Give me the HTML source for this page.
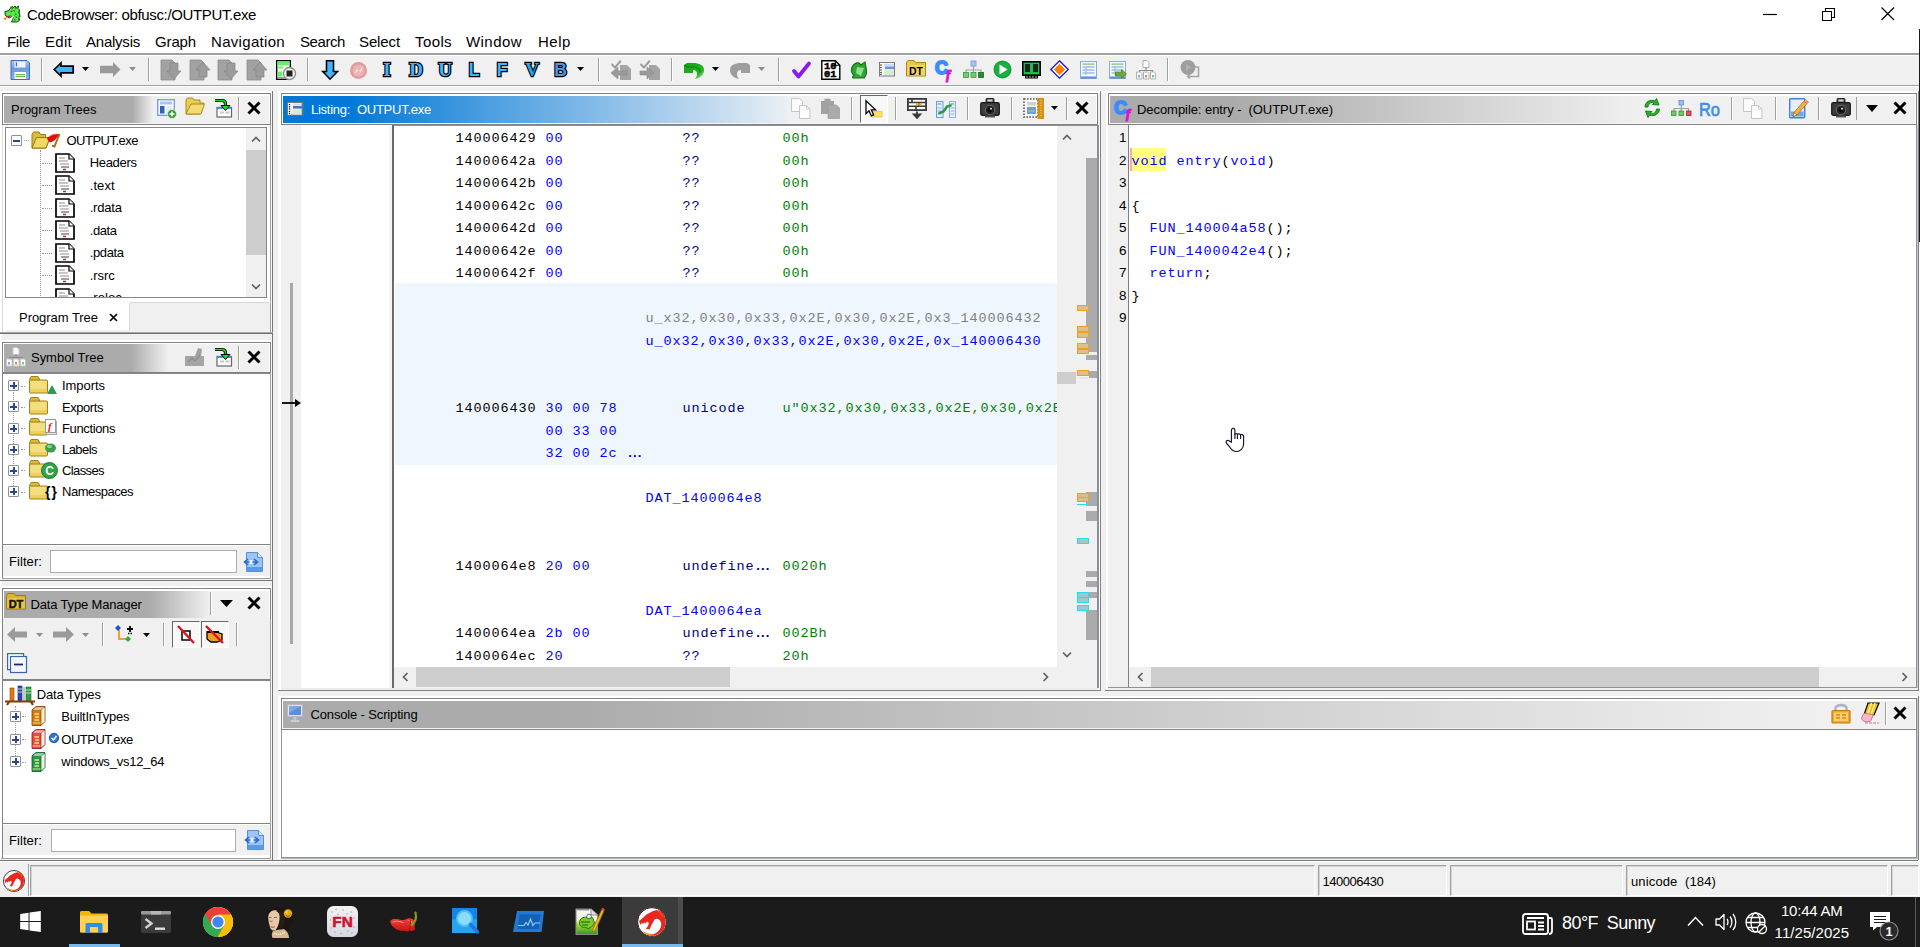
<!DOCTYPE html><html><head><meta charset="utf-8"><title>CodeBrowser: obfusc:/OUTPUT.exe</title><style>html,body{margin:0;padding:0}body{width:1920px;height:947px;position:relative;overflow:hidden;background:#f0f0f0;font-family:"Liberation Sans",sans-serif}body div,body svg{position:absolute;box-sizing:border-box}svg{overflow:visible}</style></head><body><div style="left:0px;top:0px;width:1920px;height:53px;background:#ffffff;"></div>
<svg style="left:3px;top:5px;" width="18" height="18" viewBox="0 0 18 18">
<path d="M2 6.500L6 5.500 7.500 3 9 1.500 10.500 2.500 12 1 13.500 2.500 15.500 1 15 3.500 16.500 5 16 8 17 10 16 12.500 16.500 15 14.500 17 8.500 17 9.500 14 11 10.500 9 11.500 6 13 4.500 12 3 11 2 9z" fill="#48f048" stroke="#0a2a0a" stroke-width=".9" stroke-linejoin="round"/>
<path d="M8 2l1.500 1.500M12 1.500l1 2M15.500 7l1 .5M16 11l1 .5M15.500 14l1 1M11 5.500l.5.500M12.500 9l.5.500M11.500 14.500l.5.500M13 12l.5.500" stroke="#4a5a0a" stroke-width="1.100" stroke-linecap="round"/>
<path d="M3.500 11.500l5-1.500-2.500 2.500z" fill="#d81010"/>
<path d="M0 13.500l4-1.500-1 3-1.500-.5z" fill="#ff8a10"/>
<path d="M10.500 10.500L7.500 16" stroke="#fff" stroke-width="1.300"/>
<circle cx="8.500" cy="6.300" r=".9" fill="#d81010"/></svg>
<div style="left:27px;top:4.80px;font:15px/20px 'Liberation Sans', sans-serif;color:#000;white-space:pre;letter-spacing:-0.357px;">CodeBrowser: obfusc:/OUTPUT.exe</div>
<svg style="left:1763px;top:8px;" width="16" height="12" viewBox="0 0 16 12"><path d="M0 6.5H14" stroke="#000" stroke-width="1.2"/></svg>
<svg style="left:1822px;top:8px;" width="14" height="14" viewBox="0 0 14 14"><path d="M.5 3.5h9v9h-9z M3.5 3.5v-3h9v9h-3" fill="none" stroke="#000" stroke-width="1.1"/></svg>
<svg style="left:1881px;top:7px;" width="14" height="14" viewBox="0 0 14 14"><path d="M.5 .5L13 13M13 .5L.5 13" stroke="#000" stroke-width="1.2"/></svg>
<div style="left:7px;top:31.80px;font:15px/20px 'Liberation Sans', sans-serif;color:#000;white-space:pre;letter-spacing:-0.292px;">File</div>
<div style="left:45px;top:31.80px;font:15px/20px 'Liberation Sans', sans-serif;color:#000;white-space:pre;letter-spacing:0.288px;">Edit</div>
<div style="left:86px;top:31.80px;font:15px/20px 'Liberation Sans', sans-serif;color:#000;white-space:pre;letter-spacing:-0.232px;">Analysis</div>
<div style="left:155px;top:31.80px;font:15px/20px 'Liberation Sans', sans-serif;color:#000;white-space:pre;letter-spacing:-0.137px;">Graph</div>
<div style="left:211px;top:31.80px;font:15px/20px 'Liberation Sans', sans-serif;color:#000;white-space:pre;letter-spacing:0.313px;">Navigation</div>
<div style="left:300px;top:31.80px;font:15px/20px 'Liberation Sans', sans-serif;color:#000;white-space:pre;letter-spacing:-0.421px;">Search</div>
<div style="left:359px;top:31.80px;font:15px/20px 'Liberation Sans', sans-serif;color:#000;white-space:pre;letter-spacing:-0.115px;">Select</div>
<div style="left:415px;top:31.80px;font:15px/20px 'Liberation Sans', sans-serif;color:#000;white-space:pre;letter-spacing:0.397px;">Tools</div>
<div style="left:466px;top:31.80px;font:15px/20px 'Liberation Sans', sans-serif;color:#000;white-space:pre;letter-spacing:0.442px;">Window</div>
<div style="left:538px;top:31.80px;font:15px/20px 'Liberation Sans', sans-serif;color:#000;white-space:pre;letter-spacing:0.538px;">Help</div>
<div style="left:0px;top:53px;width:1920px;height:2px;background:#a0a0a0;"></div>
<div style="left:0px;top:55px;width:1920px;height:1px;background:#ffffff;"></div>
<div style="left:0px;top:56px;width:1920px;height:29px;background:#f0f0f0;"></div>
<div style="left:0px;top:85px;width:1920px;height:1px;background:#a0a0a0;"></div>
<div style="left:0px;top:86px;width:1920px;height:1px;background:#ffffff;"></div>
<div style="left:41px;top:58px;width:1px;height:23px;background:#a0a0a0;"></div>
<div style="left:42px;top:58px;width:1px;height:23px;background:#ffffff;"></div>
<div style="left:148px;top:58px;width:1px;height:23px;background:#a0a0a0;"></div>
<div style="left:149px;top:58px;width:1px;height:23px;background:#ffffff;"></div>
<div style="left:307px;top:58px;width:1px;height:23px;background:#a0a0a0;"></div>
<div style="left:308px;top:58px;width:1px;height:23px;background:#ffffff;"></div>
<div style="left:598px;top:58px;width:1px;height:23px;background:#a0a0a0;"></div>
<div style="left:599px;top:58px;width:1px;height:23px;background:#ffffff;"></div>
<div style="left:671px;top:58px;width:1px;height:23px;background:#a0a0a0;"></div>
<div style="left:672px;top:58px;width:1px;height:23px;background:#ffffff;"></div>
<div style="left:778px;top:58px;width:1px;height:23px;background:#a0a0a0;"></div>
<div style="left:779px;top:58px;width:1px;height:23px;background:#ffffff;"></div>
<div style="left:1167px;top:58px;width:1px;height:23px;background:#a0a0a0;"></div>
<div style="left:1168px;top:58px;width:1px;height:23px;background:#ffffff;"></div>
<svg style="left:10px;top:60px;" width="20" height="20" viewBox="0 0 20 20"><defs><linearGradient id="sv" x1="0" y1="0" x2="0" y2="1"><stop offset="0" stop-color="#a9c4ee"/><stop offset=".45" stop-color="#6f9bdc"/><stop offset="1" stop-color="#8fb0e6"/></linearGradient></defs>
<path d="M1 .5h16l2.5 2.5v16.5h-18.500z" fill="url(#sv)" stroke="#3b6cc0" stroke-width="1"/>
<rect x="4.500" y="1.500" width="11" height="6" fill="#eef3fb"/><rect x="5.800" y="2.300" width="1.300" height="4" fill="#3b6cc0"/>
<rect x="4.500" y="12" width="11.500" height="7" fill="#fff"/><rect x="5.500" y="14" width="9.500" height="1.200" fill="#74b84a"/><rect x="5.500" y="16" width="9.500" height="1.200" fill="#74b84a"/></svg>
<svg style="left:53px;top:62px;" width="21" height="16" viewBox="0 0 21 16"><path d="M1.200 7.500L8 1v3.200h12.200v6.600H8V14z" fill="#40b4ff" stroke="#000" stroke-width="1.700" stroke-linejoin="miter"/></svg>
<svg style="left:82px;top:67px;" width="7" height="4" viewBox="0 0 7 4"><path d="M0 0h7l-3.5 4z" fill="#000"/></svg>
<svg style="left:100px;top:62px;" width="21" height="16" viewBox="0 0 21 16"><path d="M20.500 7.500L13 0v3.800H0v7.400h13V15z" fill="#9a9a9a"/></svg>
<svg style="left:129px;top:67px;" width="7" height="4" viewBox="0 0 7 4"><path d="M0 0h7l-3.5 4z" fill="#8e8e8e"/></svg>
<svg style="left:161px;top:60px;" width="20" height="20" viewBox="0 0 20 20"><path d="M0 0h11l3 3v17H0z" fill="#a2a2a2"/><path d="M0 0h11l3 3v17H0z" fill="none" stroke="#8a8a8a" stroke-width=".8"/><path d="M9 3h8v8h3l-7 8-7-8h3z" fill="#9c9c9c" stroke="#858585" stroke-width=".7"/></svg>
<svg style="left:190px;top:60px;" width="20" height="20" viewBox="0 0 20 20"><path d="M0 0h11l3 3v17H0z" fill="#a2a2a2"/><path d="M0 0h11l3 3v17H0z" fill="none" stroke="#8a8a8a" stroke-width=".8"/><path d="M13 2l7 8h-3v7H9v-7H6z" fill="#9c9c9c" stroke="#858585" stroke-width=".7"/></svg>
<svg style="left:218px;top:60px;" width="20" height="20" viewBox="0 0 20 20"><path d="M0 0h11l3 3v17H0z" fill="#a2a2a2"/><path d="M0 0h11l3 3v17H0z" fill="none" stroke="#8a8a8a" stroke-width=".8"/><path d="M9 3h8v8h3l-7 8-7-8h3z" fill="#9c9c9c" stroke="#858585" stroke-width=".7"/></svg>
<svg style="left:247px;top:60px;" width="20" height="20" viewBox="0 0 20 20"><path d="M0 0h11l3 3v17H0z" fill="#a2a2a2"/><path d="M0 0h11l3 3v17H0z" fill="none" stroke="#8a8a8a" stroke-width=".8"/><path d="M13 2l7 8h-3v7H9v-7H6z" fill="#9c9c9c" stroke="#858585" stroke-width=".7"/></svg>
<svg style="left:276px;top:60px;" width="20" height="20" viewBox="0 0 20 20"><rect x=".7" y=".7" width="13.600" height="18.600" fill="#fff" stroke="#000" stroke-width="1.400"/>
<rect x="1.400" y="1.400" width="12.200" height="4" fill="#66f066"/><rect x="1.400" y="6.500" width="6" height="2" fill="#66f066"/><rect x="1.400" y="11.500" width="5" height="5" fill="#66f066"/><rect x="1.400" y="17" width="12" height="1.600" fill="#999"/>
<circle cx="13.500" cy="13.500" r="6" fill="#f4f4f4" stroke="#8e8e8e" stroke-width="1.400"/><rect x="10.500" y="10.500" width="6" height="6" fill="#222"/></svg>
<svg style="left:322px;top:60px;" width="16" height="20" viewBox="0 0 16 20"><path d="M4.500 .8h7v10.700h4L8 19.200 .8 11.500h3.700z" fill="#40b4ff" stroke="#000" stroke-width="1.600"/></svg>
<svg style="left:349px;top:61px;" width="19" height="19" viewBox="0 0 19 19"><circle cx="9.500" cy="9.500" r="8.500" fill="#e59a9a"/><circle cx="9.500" cy="9.500" r="6" fill="#ecb5b5"/><path d="M5 13l3-5 2 2 4-5-2 6-2-2z" fill="#f7e0e0"/></svg>
<svg style="left:379px;top:60px" width="16" height="20" viewBox="0 0 16 20"><text x="8.0" y="15.500" text-anchor="middle" font-family='"Liberation Serif",serif' font-weight="bold" font-size="19" fill="#40b4ff" stroke="#000" stroke-width="2.400" paint-order="stroke">I</text></svg>
<svg style="left:408px;top:60px" width="16" height="20" viewBox="0 0 16 20"><text x="8.0" y="15.500" text-anchor="middle" font-family='"Liberation Serif",serif' font-weight="bold" font-size="19" fill="#40b4ff" stroke="#000" stroke-width="2.400" paint-order="stroke">D</text></svg>
<svg style="left:437px;top:60px" width="16" height="20" viewBox="0 0 16 20"><text x="8.0" y="15.500" text-anchor="middle" font-family='"Liberation Serif",serif' font-weight="bold" font-size="19" fill="#40b4ff" stroke="#000" stroke-width="2.400" paint-order="stroke">U</text></svg>
<svg style="left:466px;top:60px" width="16" height="20" viewBox="0 0 16 20"><text x="8.0" y="15.500" text-anchor="middle" font-family='"Liberation Sans",sans-serif' font-weight="bold" font-size="17.5" fill="#40b4ff" stroke="#000" stroke-width="2.400" paint-order="stroke">L</text></svg>
<svg style="left:494px;top:60px" width="16" height="20" viewBox="0 0 16 20"><text x="8.0" y="15.500" text-anchor="middle" font-family='"Liberation Sans",sans-serif' font-weight="bold" font-size="17.5" fill="#40b4ff" stroke="#000" stroke-width="2.400" paint-order="stroke">F</text></svg>
<svg style="left:524px;top:60px" width="16" height="20" viewBox="0 0 16 20"><text x="8.0" y="15.500" text-anchor="middle" font-family='"Liberation Serif",serif' font-weight="bold" font-size="19" fill="#10b0f0" stroke="#000" stroke-width="2.400" paint-order="stroke">V</text></svg>
<svg style="left:553px;top:60px" width="15" height="20" viewBox="0 0 15 20"><text x="7.5" y="15.500" text-anchor="middle" font-family='"Liberation Sans",sans-serif' font-weight="bold" font-size="17.5" fill="#4898e8" stroke="#000" stroke-width="2.400" paint-order="stroke">B</text></svg>
<svg style="left:577px;top:67px;" width="7" height="4" viewBox="0 0 7 4"><path d="M0 0h7l-3.5 4z" fill="#000"/></svg>
<svg style="left:611px;top:60px;" width="20" height="20" viewBox="0 0 20 20"><path d="M1 3l3 3 5-6 1.500 1.500L4 9 0 5z" fill="#9a9a9a"/><path d="M9 5h7l4 4v11H9z" fill="#a4a4a4"/><path d="M0 13l7-6v4h9v4H7v4z" fill="#9a9a9a" stroke="#888" stroke-width=".6"/></svg>
<svg style="left:640px;top:60px;" width="20" height="20" viewBox="0 0 20 20"><path d="M1 3l3 3 5-6 1.500 1.500L4 9 0 5z" fill="#9a9a9a"/><path d="M9 5h7l4 4v11H9z" fill="#a4a4a4"/><path d="M14 13L7 7v4H0v4h7v4z" fill="#9a9a9a" stroke="#888" stroke-width=".6"/></svg>
<svg style="left:683px;top:62px;" width="22" height="18" viewBox="0 0 22 18"><defs><linearGradient id="ug" x1="0" y1="0" x2="1" y2="1"><stop offset="0" stop-color="#1aa01a"/><stop offset=".7" stop-color="#22b022"/><stop offset="1" stop-color="#d8f0d8"/></linearGradient></defs>
<path d="M1 3v8h9v-3c3 0 4 2 4 4s-1 4-2 5c5-1 9-4 9-9S16 1 10 1H4z" fill="url(#ug)"/><path d="M1 3l3 2h6c4 0 7 2 7 5" fill="none" stroke="#0c7c0c" stroke-width="1"/></svg>
<svg style="left:712px;top:67px;" width="7" height="4" viewBox="0 0 7 4"><path d="M0 0h7l-3.5 4z" fill="#000"/></svg>
<svg style="left:730px;top:62px;" width="22" height="18" viewBox="0 0 22 18"><path d="M20 3v8h-9v-3c-3 0-4 2-4 4s1 4 2 5c-5-1-9-4-9-9S5 1 11 1h6z" fill="#9d9d9d"/></svg>
<svg style="left:758px;top:67px;" width="7" height="4" viewBox="0 0 7 4"><path d="M0 0h7l-3.5 4z" fill="#8e8e8e"/></svg>
<svg style="left:792px;top:61px;" width="19" height="18" viewBox="0 0 19 18"><path d="M2 10l4.500 5.500L17 2.500" fill="none" stroke="#8a1af0" stroke-width="3.800" stroke-linecap="round" stroke-linejoin="round"/></svg>
<svg style="left:821px;top:60px" width="20" height="20" viewBox="0 0 20 20"><path d="M.8 .8h13.500l4.500 4.500v13.900H.8z" fill="#fff" stroke="#000" stroke-width="1.400"/><path d="M14.300 .8v4.500h4.500" fill="none" stroke="#000" stroke-width="1"/><text x="3" y="9" font-family='"Liberation Mono",monospace' font-weight="bold" font-size="9.500" fill="#000" stroke="#000" stroke-width=".5" textLength="12.500" lengthAdjust="spacingAndGlyphs">10</text><text x="3" y="17" font-family='"Liberation Mono",monospace' font-weight="bold" font-size="9.500" fill="#000" stroke="#000" stroke-width=".5" textLength="12.500" lengthAdjust="spacingAndGlyphs">01</text></svg>
<svg style="left:850px;top:61px;" width="18" height="18" viewBox="0 0 18 18"><path d="M2 6c2-3 4-5 7-4l2 2 4-3 1 6c1 4 0 8-2 10H3c-1-1 0-2 1-3-2-1-3-4-2-8z" fill="#2ea82e" stroke="#1a6a1a" stroke-width="1.200"/><path d="M7 6l7 1-3 8-5-3z" fill="#8fe08f"/></svg>
<svg style="left:879px;top:62px;" width="16" height="15" viewBox="0 0 16 15"><rect x=".5" y=".5" width="15" height="13.500" fill="#f4f8f4" stroke="#7b7b7b"/><rect x="1" y="1" width="2.500" height="12.500" fill="#fff"/><path d="M2 3h.01M2 5.500h.01M2 8h.01M2 10.500h.01M2 12.500h.01" stroke="#000" stroke-width="1.400" stroke-linecap="round"/><rect x="5" y="2" width="10" height="2" fill="#c8ddf8"/><rect x="6" y="4.500" width="9" height="2.600" fill="#7090d8"/><rect x="5" y="8" width="10" height="5" fill="#d4ecd4"/></svg>
<svg style="left:906px;top:60px" width="20" height="17" viewBox="0 0 20 17"><path d="M.5 2.500l1.500-2h6l1.500 2h10v13.500H.5z" fill="#e8c84a" stroke="#a8861c"/><rect x="1.200" y="5" width="17.600" height="10.300" fill="#f0d468"/><text x="10" y="14.500" text-anchor="middle" font-family='"Liberation Sans",sans-serif' font-weight="bold" font-size="10.500" fill="#000">DT</text></svg>
<svg style="left:935px;top:60px" width="21" height="21" viewBox="0 0 21 21"><text x="0" y="14" font-family='"Liberation Sans",sans-serif' font-weight="bold" font-size="18" fill="#3a8cff" stroke="#3a8cff" stroke-width="1.800">C</text><text x="11" y="19" font-family='"Liberation Serif",serif' font-weight="bold" font-style="italic" font-size="13" fill="#d818c8" stroke="#d818c8" stroke-width="1">f</text></svg>
<svg style="left:963px;top:61px;" width="21" height="17" viewBox="0 0 21 17"><rect x="8" y="0" width="5" height="5" fill="#a8c8f0" stroke="#6a98d8" stroke-width=".8"/><path d="M10.500 5v4M3 11.500V9h15v2.500M10.500 9v2.500" fill="none" stroke="#a0a0a0" stroke-width="1.200"/><rect x=".5" y="11.500" width="5" height="5" fill="#78c878" stroke="#3a9a3a" stroke-width=".8"/><rect x="8" y="11.500" width="5" height="5" fill="#78c878" stroke="#3a9a3a" stroke-width=".8"/><rect x="15.500" y="11.500" width="5" height="5" fill="#2e8a2e" stroke="#1d6b1d" stroke-width=".8"/></svg>
<svg style="left:993px;top:60px;" width="19" height="19" viewBox="0 0 19 19"><circle cx="9.500" cy="9.500" r="9" fill="#12a03a"/><circle cx="9.500" cy="9.500" r="7.600" fill="#18b040"/><path d="M6.500 4.500l8 5-8 5z" fill="#fff"/></svg>
<svg style="left:1022px;top:61px;" width="19" height="18" viewBox="0 0 19 18"><rect x=".8" y=".8" width="17.400" height="13.400" fill="#18c048" stroke="#000" stroke-width="1.600"/><rect x="3" y="3" width="5" height="8" fill="#222"/><rect x="11" y="3" width="5" height="8" fill="#222"/><rect x="3" y="14" width="13" height="3.500" fill="#000"/><path d="M5 15v2M8 15v2M11 15v2M14 15v2" stroke="#ddd" stroke-width=".9"/></svg>
<svg style="left:1050px;top:60px;" width="19" height="19" viewBox="0 0 19 19"><path d="M9.500 .8L18.200 9.500 9.500 18.200 .8 9.500z" fill="#fff" stroke="#1414c8" stroke-width="1.300"/><path d="M9.500 3.500l2.500 3.500 3.500 2.500-3.500 2.500-2.500 3.500-2.500-3.500L3.500 9.500 7 7z" fill="#ff8000"/><circle cx="9.500" cy="9.500" r="4" fill="#ff8000"/></svg>
<svg style="left:1080px;top:61px;" width="17" height="18" viewBox="0 0 17 18"><rect x=".5" y=".5" width="16" height="17" fill="#f4f8fe" stroke="#88aadc"/><rect x="1" y="15.500" width="15" height="2" fill="#5f8fd6"/><rect x="2.500" y="2.500" width="12" height="1.200" fill="#7cc06c"/><path d="M2.500 6h12M2.500 9h12M2.500 12h12M6 5v9" stroke="#a0bce6" stroke-width="1.300"/></svg>
<svg style="left:1109px;top:61px;" width="18" height="19" viewBox="0 0 18 19"><rect x=".5" y=".5" width="16" height="17" fill="#f4f8fe" stroke="#88aadc"/><rect x="1" y="15.500" width="15" height="2" fill="#5f8fd6"/><rect x="2.500" y="2.500" width="12" height="1.200" fill="#7cc06c"/><path d="M2.500 6h12M2.500 9h12M2.500 12h12M6 5v9" stroke="#a0bce6" stroke-width="1.300"/><path d="M6.500 11h6V8.500l5 4.500-5 4.500V15h-6z" fill="#6ea83c" stroke="#4a8a1c" stroke-width=".8"/></svg>
<svg style="left:1136px;top:60px;" width="20" height="20" viewBox="0 0 20 20"><path d="M7 .5h4l2 2v5H7z" fill="#fafafa" stroke="#b0b0b0"/><path d="M10 7.500v3M3.500 12v-1.500h13V12" fill="none" stroke="#8c8c8c" stroke-width="1.200"/><path d="M.5 12h4l1.500 1.500v5.500H.5z" fill="#fff" stroke="#b0b0b0"/><path d="M7.500 12h4l1.500 1.500v5.500h-5.500z" fill="#fff" stroke="#b0b0b0"/><path d="M14.500 12h4l1 1.500v5.500h-5z" fill="#fff" stroke="#b0b0b0"/><rect x="2" y="15" width="2" height="2.500" fill="#78a8e8"/><rect x="9" y="15" width="2" height="2.500" fill="#f08040"/><rect x="16" y="15" width="2" height="2.500" fill="#70d070"/></svg>
<svg style="left:1180px;top:60px;" width="20" height="20" viewBox="0 0 20 20"><circle cx="8" cy="7.500" r="7.500" fill="#9e9e9e"/><path d="M6 4l5 3.500-5 3.500z" fill="#b2b2b2"/><path d="M15 7h3.500v9.500H8M10 14.500l-2.500 2 2.500 2" fill="none" stroke="#a6a6a6" stroke-width="1.600"/></svg>
<div style="left:0px;top:91px;width:273px;height:2px;background:#ffffff;"></div>
<div style="left:278px;top:91px;width:1642px;height:2px;background:#ffffff;"></div>
<div style="left:0px;top:91px;width:2px;height:768px;background:#ffffff;"></div>
<div style="left:272px;top:91px;width:1px;height:770px;background:#767676;"></div>
<div style="left:270px;top:93px;width:1px;height:239px;background:#a0a0a0;"></div>
<div style="left:271px;top:93px;width:1px;height:239px;background:#f8f8f8;"></div>
<div style="left:0px;top:332px;width:273px;height:1px;background:#a8a8a8;"></div>
<div style="left:0px;top:333px;width:273px;height:1px;background:#6e6e6e;"></div>
<div style="left:2px;top:125px;width:1px;height:207px;background:#dcdcdc;"></div>
<div style="left:3px;top:125px;width:2px;height:207px;background:#ffffff;"></div>
<div style="left:2px;top:93px;width:269px;height:32px;border:1px solid #828282;background:#ffffff;"></div>
<div style="left:4px;top:96px;width:265px;height:27px;background:linear-gradient(90deg,#ababab 0,#ababab 128px,#f0f0f0 149px);"></div>
<div style="left:4px;top:123px;width:265px;height:1px;background:#f4f4f4;"></div>
<svg style="left:157px;top:99px;" width="20" height="20" viewBox="0 0 20 20"><rect x=".700" y=".700" width="16.600" height="15.600" fill="#fdfdff" stroke="#7ba0dc" stroke-width="1.400"/><rect x="3" y="2.500" width="12" height="3" fill="#a8c6ee"/><rect x="3" y="7" width="4.500" height="7.500" fill="#2f62b8"/><rect x="9" y="7" width="6" height="7.500" fill="#e3ecf8"/><circle cx="15" cy="15" r="4.500" fill="#3a9a3a" stroke="#d8efd8" stroke-width=".8"/><path d="M12.500 15h5M15 12.500v5" stroke="#fff" stroke-width="1.500"/></svg>
<svg style="left:185px;top:97px;" width="20" height="19" viewBox="0 0 20 19"><path d="M1 3l1.500-2h5l1.500 2h6v3h4l-4 11H1z" fill="#e9cc53" stroke="#a88a1e"/><path d="M1 17L6 7h13.500L16 17z" fill="#f3dc74" stroke="#a88a1e"/></svg>
<svg style="left:214px;top:99px;" width="20" height="20" viewBox="0 0 20 20"><rect x="3" y="8.500" width="14.500" height="9.500" fill="#fff" stroke="#666" stroke-width="1.200"/><rect x="3" y="8" width="14.500" height="1.800" fill="#2a80f0"/><path d="M6 13.500h4M11.500 13.500h4" stroke="#c8c8c8" stroke-width="2"/><path d="M1 1.500h7c2.500 0 3.500 1.500 3.500 3.500v1.500" fill="none" stroke="#000" stroke-width="3.200"/><path d="M1 1.500h7c2.500 0 3.500 1.500 3.500 3.500v1.500" fill="none" stroke="#18e018" stroke-width="1.500"/><path d="M7 6.500h9l-4.500 5z" fill="#18e018" stroke="#000" stroke-width="1"/></svg>
<div style="left:11px;top:101.30px;font:13px/17px 'Liberation Sans', sans-serif;color:#000;white-space:pre;letter-spacing:-0.044px;">Program Trees</div>
<div style="left:238px;top:97px;width:1px;height:23px;background:#a0a0a0;"></div>
<div style="left:239px;top:97px;width:1px;height:23px;background:#ffffff;"></div>
<svg style="left:247px;top:101px;" width="14" height="14" viewBox="0 0 14 14"><path d="M1.500 1.500l11 11M12.500 1.500l-11 11" stroke="#000" stroke-width="3" stroke-linecap="butt"/></svg>
<div style="left:3px;top:125px;width:267px;height:178px;background:#ffffff;"></div>
<div style="left:5px;top:127px;width:262px;height:171px;background:#ffffff;border:1px solid #828790;"></div>
<div style="left:246px;top:128px;width:20px;height:169px;background:#f0f0f0;"></div>
<div style="left:246px;top:150px;width:20px;height:105px;background:#cdcdcd;"></div>
<svg style="left:250px;top:133px;" width="12" height="12" viewBox="-6 -6 12 12"><path d="M-4 2.500L0 -1.500 4 2.500" fill="none" stroke="#606060" stroke-width="1.700"/></svg>
<svg style="left:250px;top:281px;" width="12" height="12" viewBox="-6 -6 12 12"><path d="M-4 -2.500L0 1.500 4 -2.500" fill="none" stroke="#606060" stroke-width="1.700"/></svg>
<div style="left:6px;top:128px;width:240px;height:169px;overflow:hidden">
<div style="left:34px;top:22px;width:0;height:150px;border-left:1px dotted #9a9a9a"></div>
<div style="left:5px;top:7px;width:11px;height:11px;background:#ffffff;border:1px solid #919191;border-radius:1px;"></div>
<div style="left:7px;top:11.5px;width:7px;height:2px;background:#2b4594;"></div>
<div style="left:18px;top:12px;width:5px;height:0;border-top:1px dotted #9a9a9a"></div>
<svg style="left:25px;top:3px;" width="30" height="18" viewBox="0 0 30 18"><path d="M1 3.500l1.500-2.500h5.500l1.500 2.500h5v3h4.500L15 17H1z" fill="#dcbc38" stroke="#96780e"/><path d="M1 17L5.500 6.500h13.500L15 17z" fill="#f2da62" stroke="#96780e"/><path d="M16 8c2-4 7-5.500 12.500-5-2 3-4 7-9.500 8.500z" fill="#e00808"/><path d="M18 6c2-2 5-2.800 8-2.800" fill="none" stroke="#ff6a5a" stroke-width="1"/><path d="M28.500 3L23.500 15.500l-2.500-.7" fill="none" stroke="#9a7a14" stroke-width="2"/></svg>
<div style="left:60.5px;top:3.70px;font:13px/17px 'Liberation Sans', sans-serif;color:#000;white-space:pre;letter-spacing:-0.507px;">OUTPUT.exe</div>
<div style="left:36px;top:34.5px;width:10px;height:0;border-top:1px dotted #9a9a9a"></div>
<svg style="left:49px;top:24.5px;" width="20" height="20" viewBox="0 0 20 20"><path d="M1 1h13l5 5v13H1z" fill="#fff" stroke="#000" stroke-width="1.700"/><path d="M14 1v5h5" fill="#fff" stroke="#000" stroke-width="1.200"/><path d="M4 5h6M4 8h9M5 11h9" stroke="#b4b4b4" stroke-width="1.300"/><path d="M6 14h8" stroke="#8a8a8a" stroke-width="1.600"/><path d="M8 16.500h3" stroke="#b03030" stroke-width="1.500"/></svg>
<div style="left:83.7px;top:26.20px;font:13px/17px 'Liberation Sans', sans-serif;color:#000;white-space:pre;letter-spacing:-0.305px;">Headers</div>
<div style="left:36px;top:57.0px;width:10px;height:0;border-top:1px dotted #9a9a9a"></div>
<svg style="left:49px;top:47.0px;" width="20" height="20" viewBox="0 0 20 20"><path d="M1 1h13l5 5v13H1z" fill="#fff" stroke="#000" stroke-width="1.700"/><path d="M14 1v5h5" fill="#fff" stroke="#000" stroke-width="1.200"/><path d="M4 5h6M4 8h9M5 11h9" stroke="#b4b4b4" stroke-width="1.300"/><path d="M6 14h8" stroke="#8a8a8a" stroke-width="1.600"/><path d="M8 16.500h3" stroke="#b03030" stroke-width="1.500"/></svg>
<div style="left:83.7px;top:48.70px;font:13px/17px 'Liberation Sans', sans-serif;color:#000;white-space:pre;letter-spacing:0.087px;">.text</div>
<div style="left:36px;top:79.5px;width:10px;height:0;border-top:1px dotted #9a9a9a"></div>
<svg style="left:49px;top:69.5px;" width="20" height="20" viewBox="0 0 20 20"><path d="M1 1h13l5 5v13H1z" fill="#fff" stroke="#000" stroke-width="1.700"/><path d="M14 1v5h5" fill="#fff" stroke="#000" stroke-width="1.200"/><path d="M4 5h6M4 8h9M5 11h9" stroke="#b4b4b4" stroke-width="1.300"/><path d="M6 14h8" stroke="#8a8a8a" stroke-width="1.600"/><path d="M8 16.500h3" stroke="#b03030" stroke-width="1.500"/></svg>
<div style="left:83.7px;top:71.20px;font:13px/17px 'Liberation Sans', sans-serif;color:#000;white-space:pre;letter-spacing:-0.207px;">.rdata</div>
<div style="left:36px;top:102.0px;width:10px;height:0;border-top:1px dotted #9a9a9a"></div>
<svg style="left:49px;top:92.0px;" width="20" height="20" viewBox="0 0 20 20"><path d="M1 1h13l5 5v13H1z" fill="#fff" stroke="#000" stroke-width="1.700"/><path d="M14 1v5h5" fill="#fff" stroke="#000" stroke-width="1.200"/><path d="M4 5h6M4 8h9M5 11h9" stroke="#b4b4b4" stroke-width="1.300"/><path d="M6 14h8" stroke="#8a8a8a" stroke-width="1.600"/><path d="M8 16.500h3" stroke="#b03030" stroke-width="1.500"/></svg>
<div style="left:83.7px;top:93.70px;font:13px/17px 'Liberation Sans', sans-serif;color:#000;white-space:pre;letter-spacing:-0.382px;">.data</div>
<div style="left:36px;top:124.5px;width:10px;height:0;border-top:1px dotted #9a9a9a"></div>
<svg style="left:49px;top:114.5px;" width="20" height="20" viewBox="0 0 20 20"><path d="M1 1h13l5 5v13H1z" fill="#fff" stroke="#000" stroke-width="1.700"/><path d="M14 1v5h5" fill="#fff" stroke="#000" stroke-width="1.200"/><path d="M4 5h6M4 8h9M5 11h9" stroke="#b4b4b4" stroke-width="1.300"/><path d="M6 14h8" stroke="#8a8a8a" stroke-width="1.600"/><path d="M8 16.500h3" stroke="#b03030" stroke-width="1.500"/></svg>
<div style="left:83.7px;top:116.20px;font:13px/17px 'Liberation Sans', sans-serif;color:#000;white-space:pre;letter-spacing:-0.357px;">.pdata</div>
<div style="left:36px;top:147.0px;width:10px;height:0;border-top:1px dotted #9a9a9a"></div>
<svg style="left:49px;top:137.0px;" width="20" height="20" viewBox="0 0 20 20"><path d="M1 1h13l5 5v13H1z" fill="#fff" stroke="#000" stroke-width="1.700"/><path d="M14 1v5h5" fill="#fff" stroke="#000" stroke-width="1.200"/><path d="M4 5h6M4 8h9M5 11h9" stroke="#b4b4b4" stroke-width="1.300"/><path d="M6 14h8" stroke="#8a8a8a" stroke-width="1.600"/><path d="M8 16.500h3" stroke="#b03030" stroke-width="1.500"/></svg>
<div style="left:83.7px;top:138.70px;font:13px/17px 'Liberation Sans', sans-serif;color:#000;white-space:pre;letter-spacing:-0.054px;">.rsrc</div>
<div style="left:36px;top:169.5px;width:10px;height:0;border-top:1px dotted #9a9a9a"></div>
<svg style="left:49px;top:159.5px;" width="20" height="20" viewBox="0 0 20 20"><path d="M1 1h13l5 5v13H1z" fill="#fff" stroke="#000" stroke-width="1.700"/><path d="M14 1v5h5" fill="#fff" stroke="#000" stroke-width="1.200"/><path d="M4 5h6M4 8h9M5 11h9" stroke="#b4b4b4" stroke-width="1.300"/><path d="M6 14h8" stroke="#8a8a8a" stroke-width="1.600"/><path d="M8 16.500h3" stroke="#b03030" stroke-width="1.500"/></svg>
<div style="left:83.7px;top:161.20px;font:13px/17px 'Liberation Sans', sans-serif;color:#000;white-space:pre;letter-spacing:0.035px;">.reloc</div>
</div>
<div style="left:130px;top:302px;width:141px;height:1px;background:#d9d9d9;"></div>
<div style="left:3px;top:303px;width:127px;height:27px;background:#ffffff;"></div>
<div style="left:129px;top:303px;width:1px;height:27px;background:#d9d9d9;"></div>
<div style="left:19px;top:308.80px;font:13px/17px 'Liberation Sans', sans-serif;color:#000;white-space:pre;letter-spacing:-0.039px;">Program Tree</div>
<svg style="left:108.5px;top:313px;" width="9" height="9" viewBox="0 0 9 9"><path d="M1 1l7 7M8 1l-7 7" stroke="#000" stroke-width="1.700"/></svg>
<div style="left:0px;top:340px;width:272px;height:2px;background:#ffffff;"></div>
<div style="left:2px;top:342px;width:1px;height:237px;background:#828282;"></div>
<div style="left:270px;top:342px;width:1px;height:237px;background:#a0a0a0;"></div>
<div style="left:271px;top:342px;width:1px;height:237px;background:#f8f8f8;"></div>
<div style="left:3px;top:576px;width:267px;height:2px;background:#ffffff;"></div>
<div style="left:2px;top:578px;width:269px;height:1px;background:#a0a0a0;"></div>
<div style="left:0px;top:580px;width:273px;height:1px;background:#767676;"></div>
<div style="left:2px;top:342px;width:269px;height:31px;border:1px solid #828282;background:#ffffff;"></div>
<div style="left:4px;top:344px;width:265px;height:28px;background:linear-gradient(90deg,#ababab 0,#ababab 127px,#f0f0f0 164px);"></div>
<svg style="left:6px;top:347px;" width="20" height="20" viewBox="0 0 20 20"><path d="M7 .5h4l2 2v5H7z" fill="#fafafa" stroke="#c8c8c8"/><path d="M10 7.500v3M3.500 12v-1.500h13V12" fill="none" stroke="#8c8c8c" stroke-width="1.200"/><path d="M.5 12h4l1.500 1.500v5.500H.5z" fill="#fff" stroke="#c8c8c8"/><path d="M7.500 12h4l1.500 1.500v5.500h-5.500z" fill="#fff" stroke="#c8c8c8"/><path d="M14.500 12h4l1 1.500v5.500h-5z" fill="#fff" stroke="#c8c8c8"/><rect x="2" y="15" width="2" height="2.500" fill="#78a8e8"/><rect x="9" y="15" width="2" height="2.500" fill="#f08040"/><rect x="16" y="15" width="2" height="2.500" fill="#70d070"/></svg>
<svg style="left:185px;top:347px;" width="20" height="20" viewBox="0 0 20 20"><rect x="0" y="9" width="19" height="10" fill="#a6a6a6"/><path d="M10 9l3-8 4 1-1 7z" fill="#a0a0a0"/><path d="M3 15l4-4 3 3 5-6" fill="none" stroke="#8d8d8d" stroke-width="1.500"/></svg>
<svg style="left:214px;top:348px;" width="20" height="20" viewBox="0 0 20 20"><rect x="3" y="8.500" width="14.500" height="9.500" fill="#fff" stroke="#666" stroke-width="1.200"/><rect x="3" y="8" width="14.500" height="1.800" fill="#2a80f0"/><path d="M6 13.500h4M11.500 13.500h4" stroke="#c8c8c8" stroke-width="2"/><path d="M1 1.500h7c2.500 0 3.500 1.500 3.500 3.500v1.500" fill="none" stroke="#000" stroke-width="3.200"/><path d="M1 1.500h7c2.500 0 3.500 1.500 3.500 3.500v1.500" fill="none" stroke="#18e018" stroke-width="1.500"/><path d="M7 6.500h9l-4.500 5z" fill="#18e018" stroke="#000" stroke-width="1"/></svg>
<div style="left:31px;top:349.30px;font:13px/17px 'Liberation Sans', sans-serif;color:#000;white-space:pre;letter-spacing:-0.024px;">Symbol Tree</div>
<div style="left:3px;top:373px;width:267px;height:1px;background:#828790;"></div>
<div style="left:238px;top:346px;width:1px;height:23px;background:#a0a0a0;"></div>
<div style="left:239px;top:346px;width:1px;height:23px;background:#ffffff;"></div>
<svg style="left:247px;top:350px;" width="14" height="14" viewBox="0 0 14 14"><path d="M1.500 1.500l11 11M12.500 1.500l-11 11" stroke="#000" stroke-width="3" stroke-linecap="butt"/></svg>
<div style="left:3px;top:374px;width:267px;height:170px;background:#ffffff;"></div>
<div style="left:3px;top:544px;width:267px;height:1px;background:#828282;"></div>
<div style="left:3px;top:545px;width:267px;height:1px;background:#ffffff;"></div>
<div style="left:13px;top:392px;width:0;height:100px;border-left:1px dotted #9a9a9a"></div>
<div style="left:8px;top:380px;width:11px;height:11px;background:#ffffff;border:1px solid #919191;border-radius:1px;"></div>
<div style="left:10px;top:384.5px;width:7px;height:2px;background:#2b4594;"></div>
<div style="left:12.5px;top:382px;width:2px;height:7px;background:#2b4594;"></div>
<div style="left:21px;top:386px;width:4px;height:0;border-top:1px dotted #9a9a9a"></div>
<svg style="left:29px;top:376px;" width="20" height="19" viewBox="0 0 20 19"><path d="M.5 3.500L2 .5h7l1.500 2.500v1.500H.5z" fill="#d9b93a" stroke="#a18318"/><rect x=".5" y="4" width="18" height="13" rx="1" fill="#ecd05a" stroke="#a18318"/><rect x="1.500" y="5" width="16" height="8" fill="#f6e68e" opacity=".7"/></svg>
<div style="left:62px;top:377.30px;font:13px/17px 'Liberation Sans', sans-serif;color:#000;white-space:pre;letter-spacing:-0.048px;">Imports</div>
<div style="left:8px;top:401px;width:11px;height:11px;background:#ffffff;border:1px solid #919191;border-radius:1px;"></div>
<div style="left:10px;top:405.5px;width:7px;height:2px;background:#2b4594;"></div>
<div style="left:12.5px;top:403px;width:2px;height:7px;background:#2b4594;"></div>
<div style="left:21px;top:407px;width:4px;height:0;border-top:1px dotted #9a9a9a"></div>
<svg style="left:29px;top:397px;" width="20" height="19" viewBox="0 0 20 19"><path d="M.5 3.500L2 .5h7l1.500 2.500v1.500H.5z" fill="#d9b93a" stroke="#a18318"/><rect x=".5" y="4" width="18" height="13" rx="1" fill="#ecd05a" stroke="#a18318"/><rect x="1.500" y="5" width="16" height="8" fill="#f6e68e" opacity=".7"/></svg>
<div style="left:62px;top:398.50px;font:13px/17px 'Liberation Sans', sans-serif;color:#000;white-space:pre;letter-spacing:-0.439px;">Exports</div>
<div style="left:8px;top:423px;width:11px;height:11px;background:#ffffff;border:1px solid #919191;border-radius:1px;"></div>
<div style="left:10px;top:427.5px;width:7px;height:2px;background:#2b4594;"></div>
<div style="left:12.5px;top:425px;width:2px;height:7px;background:#2b4594;"></div>
<div style="left:21px;top:428px;width:4px;height:0;border-top:1px dotted #9a9a9a"></div>
<svg style="left:29px;top:418px;" width="20" height="19" viewBox="0 0 20 19"><path d="M.5 3.500L2 .5h7l1.500 2.500v1.500H.5z" fill="#d9b93a" stroke="#a18318"/><rect x=".5" y="4" width="18" height="13" rx="1" fill="#ecd05a" stroke="#a18318"/><rect x="1.500" y="5" width="16" height="8" fill="#f6e68e" opacity=".7"/></svg>
<div style="left:62px;top:419.70px;font:13px/17px 'Liberation Sans', sans-serif;color:#000;white-space:pre;letter-spacing:-0.373px;">Functions</div>
<div style="left:8px;top:444px;width:11px;height:11px;background:#ffffff;border:1px solid #919191;border-radius:1px;"></div>
<div style="left:10px;top:448.5px;width:7px;height:2px;background:#2b4594;"></div>
<div style="left:12.5px;top:446px;width:2px;height:7px;background:#2b4594;"></div>
<div style="left:21px;top:449px;width:4px;height:0;border-top:1px dotted #9a9a9a"></div>
<svg style="left:29px;top:439px;" width="20" height="19" viewBox="0 0 20 19"><path d="M.5 3.500L2 .5h7l1.500 2.500v1.500H.5z" fill="#d9b93a" stroke="#a18318"/><rect x=".5" y="4" width="18" height="13" rx="1" fill="#ecd05a" stroke="#a18318"/><rect x="1.500" y="5" width="16" height="8" fill="#f6e68e" opacity=".7"/></svg>
<div style="left:62px;top:440.90px;font:13px/17px 'Liberation Sans', sans-serif;color:#000;white-space:pre;letter-spacing:-0.551px;">Labels</div>
<div style="left:8px;top:465px;width:11px;height:11px;background:#ffffff;border:1px solid #919191;border-radius:1px;"></div>
<div style="left:10px;top:469.5px;width:7px;height:2px;background:#2b4594;"></div>
<div style="left:12.5px;top:467px;width:2px;height:7px;background:#2b4594;"></div>
<div style="left:21px;top:470px;width:4px;height:0;border-top:1px dotted #9a9a9a"></div>
<svg style="left:29px;top:460px;" width="20" height="19" viewBox="0 0 20 19"><path d="M.5 3.500L2 .5h7l1.500 2.500v1.500H.5z" fill="#d9b93a" stroke="#a18318"/><rect x=".5" y="4" width="18" height="13" rx="1" fill="#ecd05a" stroke="#a18318"/><rect x="1.500" y="5" width="16" height="8" fill="#f6e68e" opacity=".7"/></svg>
<div style="left:62px;top:462.10px;font:13px/17px 'Liberation Sans', sans-serif;color:#000;white-space:pre;letter-spacing:-0.605px;">Classes</div>
<div style="left:8px;top:486px;width:11px;height:11px;background:#ffffff;border:1px solid #919191;border-radius:1px;"></div>
<div style="left:10px;top:490.5px;width:7px;height:2px;background:#2b4594;"></div>
<div style="left:12.5px;top:488px;width:2px;height:7px;background:#2b4594;"></div>
<div style="left:21px;top:492px;width:4px;height:0;border-top:1px dotted #9a9a9a"></div>
<svg style="left:29px;top:482px;" width="20" height="19" viewBox="0 0 20 19"><path d="M.5 3.500L2 .5h7l1.500 2.500v1.500H.5z" fill="#d9b93a" stroke="#a18318"/><rect x=".5" y="4" width="18" height="13" rx="1" fill="#ecd05a" stroke="#a18318"/><rect x="1.500" y="5" width="16" height="8" fill="#f6e68e" opacity=".7"/></svg>
<div style="left:62px;top:483.30px;font:13px/17px 'Liberation Sans', sans-serif;color:#000;white-space:pre;letter-spacing:-0.486px;">Namespaces</div>
<svg style="left:47px;top:385px;" width="10" height="9" viewBox="0 0 10 9"><path d="M5 0L10 9H0z" fill="#2e9a58"/></svg>
<svg style="left:45px;top:419px;" width="12" height="16" viewBox="0 0 12 16"><rect x="1.500" y="2.500" width="10" height="13" fill="#e8e8e8" stroke="#aaa"/><rect x=".5" y=".5" width="10" height="13" fill="#fff" stroke="#999"/><text x="3" y="11" font-family="'Liberation Serif',serif" font-style="italic" font-weight="bold" font-size="11" fill="#f01010">f</text></svg>
<svg style="left:45px;top:443px;" width="11" height="10" viewBox="0 0 11 10"><ellipse cx="5.500" cy="5" rx="5.500" ry="4.500" fill="#3aa050"/><ellipse cx="4.500" cy="3.500" rx="2.500" ry="1.500" fill="#8fd49c"/></svg>
<svg style="left:41px;top:462px;" width="17" height="17" viewBox="0 0 17 17"><circle cx="8.500" cy="8.500" r="8" fill="#2fa446" stroke="#1d7a30"/><text x="8.500" y="13" text-anchor="middle" font-family="'Liberation Sans',sans-serif" font-weight="bold" font-size="12" fill="#fff">C</text></svg>
<div style="left:45px;top:482.85px;font:14px/18px 'Liberation Sans', sans-serif;color:#000;white-space:pre;font-weight:bold;letter-spacing:1.051px;">{}</div>
<div style="left:9px;top:553.10px;font:13px/17px 'Liberation Sans', sans-serif;color:#000;white-space:pre;letter-spacing:0.072px;">Filter:</div>
<div style="left:50px;top:550px;width:187px;height:23px;background:#ffffff;border:1px solid #abadb3;"></div>
<svg style="left:243px;top:551.5px;" width="21" height="20" viewBox="0 0 21 20"><path d="M3.500 .5h11l5 5v14h-16z" fill="#9cc4f4" stroke="#5a90d8"/><path d="M14.500 .5v5h5" fill="#d6e8fc" stroke="#5a90d8"/><rect x="4" y="15" width="15" height="4" fill="#5a9ae8"/><path d="M2 10h12M5 7l-3.500 3L5 13M11 7l3.500 3L11 13" fill="none" stroke="#2a6ad0" stroke-width="1.600"/><rect x="6.500" y="8" width="3" height="4" fill="#eef6ff"/></svg>
<div style="left:0px;top:586px;width:272px;height:2px;background:#ffffff;"></div>
<div style="left:2px;top:588px;width:1px;height:271px;background:#828282;"></div>
<div style="left:270px;top:588px;width:1px;height:271px;background:#a0a0a0;"></div>
<div style="left:271px;top:588px;width:1px;height:271px;background:#f8f8f8;"></div>
<div style="left:3px;top:855px;width:267px;height:3px;background:#ffffff;"></div>
<div style="left:1px;top:858px;width:270px;height:1px;background:#a0a0a0;"></div>
<div style="left:2px;top:588px;width:269px;height:31px;border:1px solid #828282;border-bottom:none;background:#ffffff;"></div>
<div style="left:4px;top:591px;width:265px;height:27px;background:linear-gradient(90deg,#ababab 0,#ababab 146px,#f0f0f0 206px);"></div>
<svg style="left:6px;top:593px" width="20" height="17" viewBox="0 0 20 17"><path d="M.5 2.500l1.500-2h6l1.500 2h10v13.500H.5z" fill="#d8b432" stroke="#9a7a14"/><rect x="1.200" y="5" width="17.600" height="10.300" fill="#e6c648"/><text x="10" y="14.500" text-anchor="middle" font-family="'Liberation Sans',sans-serif" font-weight="bold" font-size="11" fill="#1a1200" stroke="#1a1200" stroke-width=".5">DT</text></svg>
<div style="left:30.6px;top:596.30px;font:13px/17px 'Liberation Sans', sans-serif;color:#000;white-space:pre;letter-spacing:-0.172px;">Data Type Manager</div>
<div style="left:3px;top:618px;width:267px;height:61px;background:#f0f0f0;"></div>
<div style="left:210px;top:592px;width:1px;height:23px;background:#a0a0a0;"></div>
<div style="left:211px;top:592px;width:1px;height:23px;background:#ffffff;"></div>
<svg style="left:220px;top:600px;" width="13" height="7" viewBox="0 0 13 7"><path d="M0 0h13l-6.500 7z" fill="#000"/></svg>
<svg style="left:247px;top:596px;" width="14" height="14" viewBox="0 0 14 14"><path d="M1.500 1.500l11 11M12.500 1.500l-11 11" stroke="#000" stroke-width="3" stroke-linecap="butt"/></svg>
<svg style="left:7px;top:627px;" width="20" height="16" viewBox="0 0 20 16"><path d="M0 7.500L8 0v4.500h12v6H8V15z" fill="#9a9a9a"/></svg>
<svg style="left:36px;top:633px;" width="7" height="4" viewBox="0 0 7 4"><path d="M0 0h7l-3.5 4z" fill="#8e8e8e"/></svg>
<svg style="left:53px;top:627px;" width="21" height="16" viewBox="0 0 21 16"><path d="M21 7.500L13 0v4.500H0v6h13V15z" fill="#9a9a9a"/></svg>
<svg style="left:82px;top:633px;" width="7" height="4" viewBox="0 0 7 4"><path d="M0 0h7l-3.5 4z" fill="#8e8e8e"/></svg>
<div style="left:102px;top:623px;width:1px;height:23px;background:#a0a0a0;"></div>
<div style="left:103px;top:623px;width:1px;height:23px;background:#ffffff;"></div>
<svg style="left:115px;top:625px;" width="20" height="18" viewBox="0 0 20 18"><path d="M4 5v9h9" fill="none" stroke="#f0a030" stroke-width="2"/><path d="M3 0l3 3-3 3-3-3z" fill="#2050d0"/><path d="M13 11l3 3-3 3-3-3z" fill="#30b030"/><path d="M15 1v6M12 4h6" stroke="#000" stroke-width="1.800"/><path d="M13 8.500h4" stroke="#000" stroke-width="1.500" stroke-dasharray="1.500 1"/></svg>
<svg style="left:143px;top:633px;" width="7" height="4" viewBox="0 0 7 4"><path d="M0 0h7l-3.5 4z" fill="#000"/></svg>
<div style="left:163px;top:623px;width:1px;height:23px;background:#a0a0a0;"></div>
<div style="left:164px;top:623px;width:1px;height:23px;background:#ffffff;"></div>
<div style="left:172px;top:621px;width:28px;height:27px;background:#f8f8f8;border-top:1px solid #696969;border-left:1px solid #696969;border-bottom:1px solid #ffffff;border-right:1px solid #ffffff;"></div>
<div style="left:201px;top:621px;width:28px;height:27px;background:#f8f8f8;border-top:1px solid #696969;border-left:1px solid #696969;border-bottom:1px solid #ffffff;border-right:1px solid #ffffff;"></div>
<svg style="left:177px;top:625px;" width="18" height="19" viewBox="0 0 18 19"><rect x="5" y="6" width="8" height="9" fill="#fff" stroke="#000" stroke-width="1.500"/><path d="M1 1l16 17" stroke="#e01020" stroke-width="2.400"/></svg>
<svg style="left:205px;top:625px;" width="19" height="19" viewBox="0 0 19 19"><path d="M2 7h9l6 2v6l-5 2H6l-4-3z" fill="#f0a020" stroke="#000" stroke-width="1.300"/><path d="M2 7h12" stroke="#000" stroke-width="2"/><path d="M1 1l17 17" stroke="#e01020" stroke-width="2.400"/></svg>
<div style="left:236px;top:623px;width:1px;height:23px;background:#a0a0a0;"></div>
<div style="left:237px;top:623px;width:1px;height:23px;background:#ffffff;"></div>
<svg style="left:7px;top:653px;" width="21" height="21" viewBox="0 0 21 21"><rect x=".600" y=".600" width="16" height="16" fill="#fff" stroke="#3a64b0" stroke-width="1.200"/><rect x="3.500" y="3.500" width="16" height="16" fill="#f4f7fd" stroke="#3a64b0" stroke-width="1.200"/><path d="M7 11.500h9" stroke="#1a2a6a" stroke-width="1.800"/></svg>
<div style="left:3px;top:679px;width:267px;height:1px;background:#828282;"></div>
<div style="left:3px;top:680px;width:267px;height:143px;background:#ffffff;"></div>
<div style="left:3px;top:680px;width:267px;height:1px;background:#828790;"></div>
<div style="left:3px;top:823px;width:267px;height:1px;background:#828282;"></div>
<div style="left:3px;top:824px;width:267px;height:1px;background:#ffffff;"></div>
<svg style="left:5px;top:685px;" width="30" height="20" viewBox="0 0 30 20"><rect x="5" y="3" width="4" height="13" fill="#e07818" stroke="#8a4a0a" stroke-width=".6"/><rect x="13" y="1" width="4" height="15" fill="#2848c0" stroke="#16287a" stroke-width=".6"/><rect x="18" y="2" width="2" height="14" fill="#c8c8c8"/><rect x="21" y="2" width="5" height="14" fill="#2a9a50" stroke="#1a6a34" stroke-width=".6"/><path d="M13 4h4M13 7h4M21 5h5M21 8h5" stroke="#e8e8a0" stroke-width=".9"/><path d="M0 16.500h30M4 17l-2 3M26 17l2 3" stroke="#8a3a0a" stroke-width="2.200"/></svg>
<div style="left:36.8px;top:686.30px;font:13px/17px 'Liberation Sans', sans-serif;color:#000;white-space:pre;letter-spacing:-0.152px;">Data Types</div>
<div style="left:15px;top:706px;width:0;height:50px;border-left:1px dotted #9a9a9a"></div>
<div style="left:10px;top:711px;width:11px;height:11px;background:#ffffff;border:1px solid #919191;border-radius:1px;"></div>
<div style="left:12px;top:715.5px;width:7px;height:2px;background:#2b4594;"></div>
<div style="left:14.5px;top:713px;width:2px;height:7px;background:#2b4594;"></div>
<div style="left:22px;top:716px;width:4px;height:0;border-top:1px dotted #9a9a9a"></div>
<svg style="left:31px;top:706px;" width="15" height="20" viewBox="0 0 15 20"><path d="M1 4l4-3.500h9v15l-4 4H1z" fill="#d97a10" stroke="#7a3e06" stroke-width=".8"/><path d="M1 4h9v15.500M10 4l4-3.500" fill="none" stroke="#7a3e06" stroke-width=".7"/><path d="M10.400 4.300l3.200-2.800v13.800l-3.200 3.200z" fill="#f8f0dc"/><path d="M1.500 4.300L5 1.200h8.300L10 4.300z" fill="#fff" opacity=".55"/><path d="M3.500 8h4.500M4 11h4M3.500 14h4.500" stroke="#f8e27a" stroke-width="1.500"/><path d="M1.500 17h8" stroke="#f8e27a" stroke-width=".9"/></svg>
<div style="left:61.3px;top:708.10px;font:13px/17px 'Liberation Sans', sans-serif;color:#000;white-space:pre;letter-spacing:-0.234px;">BuiltInTypes</div>
<div style="left:10px;top:734px;width:11px;height:11px;background:#ffffff;border:1px solid #919191;border-radius:1px;"></div>
<div style="left:12px;top:738.5px;width:7px;height:2px;background:#2b4594;"></div>
<div style="left:14.5px;top:736px;width:2px;height:7px;background:#2b4594;"></div>
<div style="left:22px;top:739px;width:4px;height:0;border-top:1px dotted #9a9a9a"></div>
<svg style="left:31px;top:729px;" width="15" height="20" viewBox="0 0 15 20"><path d="M1 4l4-3.500h9v15l-4 4H1z" fill="#ec4a4a" stroke="#8a1414" stroke-width=".8"/><path d="M1 4h9v15.500M10 4l4-3.500" fill="none" stroke="#8a1414" stroke-width=".7"/><path d="M10.400 4.300l3.200-2.800v13.800l-3.200 3.200z" fill="#f8f0dc"/><path d="M1.500 4.300L5 1.200h8.300L10 4.300z" fill="#fff" opacity=".55"/><path d="M3.500 8h4.500M4 11h4M3.500 14h4.500" stroke="#f8e27a" stroke-width="1.500"/><path d="M1.500 17h8" stroke="#f8e27a" stroke-width=".9"/></svg>
<div style="left:61.3px;top:730.60px;font:13px/17px 'Liberation Sans', sans-serif;color:#000;white-space:pre;letter-spacing:-0.507px;">OUTPUT.exe</div>
<div style="left:10px;top:756px;width:11px;height:11px;background:#ffffff;border:1px solid #919191;border-radius:1px;"></div>
<div style="left:12px;top:760.5px;width:7px;height:2px;background:#2b4594;"></div>
<div style="left:14.5px;top:758px;width:2px;height:7px;background:#2b4594;"></div>
<div style="left:22px;top:762px;width:4px;height:0;border-top:1px dotted #9a9a9a"></div>
<svg style="left:31px;top:752px;" width="15" height="20" viewBox="0 0 15 20"><path d="M1 4l4-3.500h9v15l-4 4H1z" fill="#1f9a52" stroke="#0e5a2a" stroke-width=".8"/><path d="M1 4h9v15.500M10 4l4-3.500" fill="none" stroke="#0e5a2a" stroke-width=".7"/><path d="M10.400 4.300l3.200-2.800v13.800l-3.200 3.200z" fill="#f8f0dc"/><path d="M1.500 4.300L5 1.200h8.300L10 4.300z" fill="#fff" opacity=".55"/><path d="M3.500 8h4.500M4 11h4M3.500 14h4.500" stroke="#f8e27a" stroke-width="1.500"/><path d="M1.500 17h8" stroke="#f8e27a" stroke-width=".9"/></svg>
<div style="left:61.3px;top:753.10px;font:13px/17px 'Liberation Sans', sans-serif;color:#000;white-space:pre;letter-spacing:-0.215px;">windows_vs12_64</div>
<svg style="left:49px;top:733px;" width="10" height="10" viewBox="0 0 10 10"><circle cx="5" cy="5" r="4.700" fill="#2a78d8" stroke="#123a80" stroke-width=".8"/><path d="M2.500 5l2 2 3-4" fill="none" stroke="#fff" stroke-width="1.400"/></svg>
<div style="left:9px;top:831.90px;font:13px/17px 'Liberation Sans', sans-serif;color:#000;white-space:pre;letter-spacing:0.072px;">Filter:</div>
<div style="left:51px;top:829px;width:185px;height:23px;background:#ffffff;border:1px solid #abadb3;"></div>
<svg style="left:243.5px;top:830.3px;" width="21" height="20" viewBox="0 0 21 20"><path d="M3.500 .5h11l5 5v14h-16z" fill="#9cc4f4" stroke="#5a90d8"/><path d="M14.500 .5v5h5" fill="#d6e8fc" stroke="#5a90d8"/><rect x="4" y="15" width="15" height="4" fill="#5a9ae8"/><path d="M2 10h12M5 7l-3.500 3L5 13M11 7l3.500 3L11 13" fill="none" stroke="#2a6ad0" stroke-width="1.600"/><rect x="6.500" y="8" width="3" height="4" fill="#eef6ff"/></svg>
<div style="left:278px;top:91px;width:3px;height:599px;background:#ffffff;"></div>
<div style="left:1100px;top:91px;width:1px;height:600px;background:#828282;"></div>
<div style="left:278px;top:690px;width:823px;height:1px;background:#828282;"></div>
<div style="left:281px;top:125px;width:20px;height:563px;background:#f0f0f0;"></div>
<div style="left:301px;top:125px;width:88px;height:563px;background:#ffffff;"></div>
<div style="left:389px;top:125px;width:3px;height:563px;background:#f4f4f4;"></div>
<div style="left:392px;top:124px;width:2px;height:564px;background:#6a6a6a;"></div>
<div style="left:394px;top:125px;width:663px;height:542px;background:#ffffff;"></div>
<div style="left:395px;top:283px;width:662px;height:182px;background:#eff6fe;"></div>
<div style="left:290px;top:283px;width:3px;height:361px;background:#a8a8a8;"></div>
<svg style="left:282px;top:397px;" width="20" height="12" viewBox="0 0 20 12"><path d="M0 6h15" stroke="#000" stroke-width="1.800"/><path d="M13 2l6 4-6 4z" fill="#000"/></svg>
<div style="left:281px;top:93px;width:817px;height:32px;border:1px solid #828282;background:#ffffff;"></div>
<div style="left:283px;top:96px;width:813px;height:27px;background:linear-gradient(90deg,#0078d7 0,#0078d7 62px,#e9eef4 503px,#f0f0f0 504px);"></div>
<div style="left:283px;top:123px;width:813px;height:1px;background:#f4f4f4;"></div>
<svg style="left:287px;top:102px;" width="17" height="14" viewBox="0 0 17 14"><rect x=".5" y=".5" width="15" height="12.500" fill="#f4f8f4" stroke="#7b7b7b"/><rect x="1" y="1" width="3" height="11.500" fill="#fff"/><path d="M2.500 2.500h.01M2.500 4.800h.01M2.500 7.100h.01M2.500 9.400h.01M2.500 11.500h.01" stroke="#000" stroke-width="1.500" stroke-linecap="round"/><rect x="5.500" y="1.500" width="9.500" height="2" fill="#c8ddf8"/><rect x="6" y="4" width="9" height="2.600" fill="#5070c8"/><rect x="5.500" y="7.500" width="9.500" height="5" fill="#d4ecd4"/><path d="M15.500 .5v13" stroke="#5a7a9a" stroke-width="1.600"/></svg>
<div style="left:311px;top:101.30px;font:13px/17px 'Liberation Sans', sans-serif;color:#fff;white-space:pre;letter-spacing:-0.249px;">Listing:  OUTPUT.exe</div>
<svg style="left:791px;top:98px;" width="20" height="21" viewBox="0 0 20 21"><path d="M.5 .5h8l3 3v10h-11z" fill="#fbfbfb" stroke="#c6c6c6"/><path d="M8.500 7.500h7l3.500 3.500v9.500h-10.500z" fill="#fdfdfd" stroke="#c6c6c6"/><path d="M15.500 7.500v3.500h3.500" fill="none" stroke="#c6c6c6"/></svg>
<svg style="left:820px;top:98px;" width="20" height="21" viewBox="0 0 20 21"><path d="M1 3h3.500V.8h6V3H14v13H1z" fill="#a2a2a2"/><path d="M8 7h8.500l3 3v10.500H8z" fill="#aaaaaa" stroke="#9a9a9a" stroke-width=".7"/></svg>
<div style="left:851px;top:97px;width:1px;height:23px;background:#a0a0a0;"></div>
<div style="left:852px;top:97px;width:1px;height:23px;background:#ffffff;"></div>
<div style="left:860px;top:95px;width:28px;height:28px;background:#f8f8f8;border-top:1px solid #696969;border-left:1px solid #696969;border-bottom:1px solid #ffffff;border-right:1px solid #ffffff;"></div>
<svg style="left:865px;top:100px;" width="18" height="18" viewBox="0 0 18 18"><rect x="7" y="11.500" width="10" height="5.500" fill="#ffe066" stroke="#f0c030" stroke-width=".8"/><path d="M1 .8v13l3-3 2.300 5 2.300-1-2.300-5h4.200z" fill="#fff" stroke="#000" stroke-width="1.300" stroke-linejoin="miter"/></svg>
<div style="left:895px;top:97px;width:1px;height:23px;background:#a0a0a0;"></div>
<div style="left:896px;top:97px;width:1px;height:23px;background:#ffffff;"></div>
<svg style="left:907px;top:98px;" width="20" height="21" viewBox="0 0 20 21"><rect x=".9" y=".9" width="18.200" height="11.200" fill="#fff" stroke="#3a3a3a" stroke-width="1.800"/><path d="M1 4.500h18M1 8.300h18M5 1v3.500M12 4.500v3.800M9 8.300v3.800" stroke="#3a3a3a" stroke-width="1.600"/><rect x="9" y="5.400" width="5.500" height="2" fill="#f0a020"/><path d="M10 13.500v4M6.800 16.500l3.200 3.500 3.200-3.500z" fill="#3a3a3a" stroke="#3a3a3a" stroke-width="1.800"/></svg>
<svg style="left:936px;top:100px;" width="20" height="19" viewBox="0 0 20 19"><rect x=".5" y="1.500" width="6.500" height="16" fill="#e8f0fc" stroke="#6a9ae0"/><rect x="13.500" y="1.500" width="6" height="16" fill="#e8f0fc" stroke="#8ab0e8"/><path d="M1.500 4h4M14.500 4h4" stroke="#7cc86c" stroke-width="1.600"/><path d="M1.500 8h4M1.500 11h4M1.500 14h4M14.500 8h4M14.500 11h4M14.500 14h4" stroke="#a8c4ec" stroke-width="1.300"/><path d="M3.500 13l4-1.500 3.500-5 3.500-1" fill="none" stroke="#2e9a3e" stroke-width="2.600" stroke-linecap="round"/></svg>
<div style="left:967px;top:97px;width:1px;height:23px;background:#a0a0a0;"></div>
<div style="left:968px;top:97px;width:1px;height:23px;background:#ffffff;"></div>
<svg style="left:980px;top:98px;" width="20" height="21" viewBox="0 0 20 21"><rect x="6" y=".5" width="8" height="5" rx="1" fill="#4a4a4a" stroke="#222"/><rect x="7.500" y="1.500" width="5" height="2" fill="#d8d8d8"/><rect x=".7" y="4.700" width="18.600" height="12.600" rx="1.500" fill="#3c3c3c" stroke="#161616" stroke-width="1.200"/><circle cx="10" cy="12" r="4.800" fill="#222" stroke="#6a6a6a"/><circle cx="10" cy="12" r="2.300" fill="#0a0a0a"/><circle cx="11" cy="10.800" r="1" fill="#e8e8e8"/><rect x="5" y="17.500" width="10" height="2" fill="#555"/></svg>
<div style="left:1011px;top:97px;width:1px;height:23px;background:#a0a0a0;"></div>
<div style="left:1012px;top:97px;width:1px;height:23px;background:#ffffff;"></div>
<svg style="left:1023px;top:98px;" width="21" height="21" viewBox="0 0 21 21"><rect x="1" y="1" width="14" height="18" fill="#fafafa" stroke="#555" stroke-width="1.600" stroke-dasharray="1.600 1.400"/><rect x="4" y="4" width="9" height="3.500" fill="#d0d0d0"/><rect x="4" y="9" width="9" height="7" fill="#6aa0e0"/><rect x="5" y="12" width="7" height="2" fill="#a8a8a8"/><rect x="14.500" y="0" width="6.500" height="21" fill="#d89010"/><path d="M18 2v17" stroke="#f8d070" stroke-width="1.200" stroke-dasharray="1 1.500"/></svg>
<svg style="left:1051px;top:106px;" width="7" height="4" viewBox="0 0 7 4"><path d="M0 0h7l-3.5 4z" fill="#000"/></svg>
<div style="left:1066px;top:97px;width:1px;height:23px;background:#a0a0a0;"></div>
<div style="left:1067px;top:97px;width:1px;height:23px;background:#ffffff;"></div>
<svg style="left:1075px;top:101px;" width="14" height="14" viewBox="0 0 14 14"><path d="M1.500 1.500l11 11M12.500 1.500l-11 11" stroke="#000" stroke-width="3" stroke-linecap="butt"/></svg>
<div style="left:1057px;top:126px;width:40px;height:541px;background:#f0f0f0;"></div>
<svg style="left:1061px;top:131px;" width="12" height="12" viewBox="-6 -6 12 12"><path d="M-4 2.500L0 -1.500 4 2.500" fill="none" stroke="#606060" stroke-width="1.700"/></svg>
<svg style="left:1061px;top:649px;" width="12" height="12" viewBox="-6 -6 12 12"><path d="M-4 -2.500L0 1.500 4 -2.500" fill="none" stroke="#606060" stroke-width="1.700"/></svg>
<div style="left:1097px;top:125px;width:2px;height:563px;background:#8a8f98;"></div>
<div style="left:1099px;top:125px;width:1px;height:565px;background:#ffffff;"></div>
<div style="left:394px;top:125px;width:703px;height:1px;background:#8a8f98;"></div>
<div style="left:1057px;top:372px;width:19px;height:12px;background:#cdcdcd;"></div>
<div style="left:1086px;top:158px;width:11px;height:194px;background:#aaaaaa;"></div>
<div style="left:1086px;top:355px;width:11px;height:5px;background:#aaaaaa;"></div>
<div style="left:1089px;top:371px;width:8px;height:7px;background:#aaaaaa;"></div>
<div style="left:1086px;top:492px;width:11px;height:14px;background:#aaaaaa;"></div>
<div style="left:1086px;top:511px;width:11px;height:10px;background:#aaaaaa;"></div>
<div style="left:1086px;top:571px;width:11px;height:6px;background:#aaaaaa;"></div>
<div style="left:1086px;top:581px;width:11px;height:6px;background:#aaaaaa;"></div>
<div style="left:1086px;top:592px;width:11px;height:6px;background:#aaaaaa;"></div>
<div style="left:1086px;top:610px;width:11px;height:30px;background:#aaaaaa;"></div>
<div style="left:1077px;top:305px;width:12px;height:6px;background:#dcc08c;border:1px solid #f0a020;"></div>
<div style="left:1077px;top:326px;width:12px;height:6px;background:#dcc08c;border:1px solid #f0a020;"></div>
<div style="left:1077px;top:332px;width:12px;height:6px;background:#dcc08c;border:1px solid #f0a020;"></div>
<div style="left:1077px;top:343px;width:12px;height:6px;background:#dcc08c;border:1px solid #f0a020;"></div>
<div style="left:1077px;top:349px;width:12px;height:5px;background:#dcc08c;border:1px solid #f0a020;"></div>
<div style="left:1077px;top:370px;width:12px;height:6px;background:#dcc08c;border:1px solid #f0a020;"></div>
<div style="left:1078px;top:376px;width:11px;height:4px;background:#e4e4e4;border:1px solid #f4f4f4;"></div>
<div style="left:1077px;top:493px;width:12px;height:5px;background:#dcc08c;border:1px solid #f0a020;"></div>
<div style="left:1077px;top:497px;width:12px;height:5px;background:#dcc08c;border:1px solid #f0a020;"></div>
<div style="left:1077px;top:504px;width:12px;height:1px;background:#20e0e8;"></div>
<div style="left:1077px;top:538px;width:12px;height:6px;background:#a0c8cc;border:1px solid #20e0e8;"></div>
<div style="left:1077px;top:592px;width:12px;height:6px;background:#a0c8cc;border:1px solid #20e0e8;"></div>
<div style="left:1077px;top:597px;width:12px;height:6px;background:#a0c8cc;border:1px solid #20e0e8;"></div>
<div style="left:1077px;top:605px;width:12px;height:6px;background:#a0c8cc;border:1px solid #20e0e8;"></div>
<div style="left:394px;top:667px;width:663px;height:20px;background:#f0f0f0;"></div>
<svg style="left:399px;top:671px;" width="12" height="12" viewBox="-6 -6 12 12"><path d="M2.500 -4L-1.500 0 2.500 4" fill="none" stroke="#606060" stroke-width="1.700"/></svg>
<svg style="left:1040px;top:671px;" width="12" height="12" viewBox="-6 -6 12 12"><path d="M-2.500 -4L1.500 0 -2.500 4" fill="none" stroke="#606060" stroke-width="1.700"/></svg>
<div style="left:416px;top:667px;width:314px;height:20px;background:#cdcdcd;"></div>
<div style="left:281px;top:688px;width:816px;height:1px;background:#e8e8e8;"></div>
<div style="left:455.4px;top:130.40px;font:13.5px/18px 'Liberation Mono', monospace;color:#000;white-space:pre;letter-spacing:0.900px;">140006429</div>
<div style="left:545.4px;top:130.40px;font:13.5px/18px 'Liberation Mono', monospace;color:#0000ff;white-space:pre;letter-spacing:0.900px;">00</div>
<div style="left:682.4px;top:130.40px;font:13.5px/18px 'Liberation Mono', monospace;color:#000080;white-space:pre;letter-spacing:0.900px;">??</div>
<div style="left:782.4px;top:130.40px;font:13.5px/18px 'Liberation Mono', monospace;color:#008000;white-space:pre;letter-spacing:0.900px;">00h</div>
<div style="left:455.4px;top:152.90px;font:13.5px/18px 'Liberation Mono', monospace;color:#000;white-space:pre;letter-spacing:0.900px;">14000642a</div>
<div style="left:545.4px;top:152.90px;font:13.5px/18px 'Liberation Mono', monospace;color:#0000ff;white-space:pre;letter-spacing:0.900px;">00</div>
<div style="left:682.4px;top:152.90px;font:13.5px/18px 'Liberation Mono', monospace;color:#000080;white-space:pre;letter-spacing:0.900px;">??</div>
<div style="left:782.4px;top:152.90px;font:13.5px/18px 'Liberation Mono', monospace;color:#008000;white-space:pre;letter-spacing:0.900px;">00h</div>
<div style="left:455.4px;top:175.40px;font:13.5px/18px 'Liberation Mono', monospace;color:#000;white-space:pre;letter-spacing:0.900px;">14000642b</div>
<div style="left:545.4px;top:175.40px;font:13.5px/18px 'Liberation Mono', monospace;color:#0000ff;white-space:pre;letter-spacing:0.900px;">00</div>
<div style="left:682.4px;top:175.40px;font:13.5px/18px 'Liberation Mono', monospace;color:#000080;white-space:pre;letter-spacing:0.900px;">??</div>
<div style="left:782.4px;top:175.40px;font:13.5px/18px 'Liberation Mono', monospace;color:#008000;white-space:pre;letter-spacing:0.900px;">00h</div>
<div style="left:455.4px;top:197.90px;font:13.5px/18px 'Liberation Mono', monospace;color:#000;white-space:pre;letter-spacing:0.900px;">14000642c</div>
<div style="left:545.4px;top:197.90px;font:13.5px/18px 'Liberation Mono', monospace;color:#0000ff;white-space:pre;letter-spacing:0.900px;">00</div>
<div style="left:682.4px;top:197.90px;font:13.5px/18px 'Liberation Mono', monospace;color:#000080;white-space:pre;letter-spacing:0.900px;">??</div>
<div style="left:782.4px;top:197.90px;font:13.5px/18px 'Liberation Mono', monospace;color:#008000;white-space:pre;letter-spacing:0.900px;">00h</div>
<div style="left:455.4px;top:220.40px;font:13.5px/18px 'Liberation Mono', monospace;color:#000;white-space:pre;letter-spacing:0.900px;">14000642d</div>
<div style="left:545.4px;top:220.40px;font:13.5px/18px 'Liberation Mono', monospace;color:#0000ff;white-space:pre;letter-spacing:0.900px;">00</div>
<div style="left:682.4px;top:220.40px;font:13.5px/18px 'Liberation Mono', monospace;color:#000080;white-space:pre;letter-spacing:0.900px;">??</div>
<div style="left:782.4px;top:220.40px;font:13.5px/18px 'Liberation Mono', monospace;color:#008000;white-space:pre;letter-spacing:0.900px;">00h</div>
<div style="left:455.4px;top:242.90px;font:13.5px/18px 'Liberation Mono', monospace;color:#000;white-space:pre;letter-spacing:0.900px;">14000642e</div>
<div style="left:545.4px;top:242.90px;font:13.5px/18px 'Liberation Mono', monospace;color:#0000ff;white-space:pre;letter-spacing:0.900px;">00</div>
<div style="left:682.4px;top:242.90px;font:13.5px/18px 'Liberation Mono', monospace;color:#000080;white-space:pre;letter-spacing:0.900px;">??</div>
<div style="left:782.4px;top:242.90px;font:13.5px/18px 'Liberation Mono', monospace;color:#008000;white-space:pre;letter-spacing:0.900px;">00h</div>
<div style="left:455.4px;top:265.40px;font:13.5px/18px 'Liberation Mono', monospace;color:#000;white-space:pre;letter-spacing:0.900px;">14000642f</div>
<div style="left:545.4px;top:265.40px;font:13.5px/18px 'Liberation Mono', monospace;color:#0000ff;white-space:pre;letter-spacing:0.900px;">00</div>
<div style="left:682.4px;top:265.40px;font:13.5px/18px 'Liberation Mono', monospace;color:#000080;white-space:pre;letter-spacing:0.900px;">??</div>
<div style="left:782.4px;top:265.40px;font:13.5px/18px 'Liberation Mono', monospace;color:#008000;white-space:pre;letter-spacing:0.900px;">00h</div>
<div style="left:645.4px;top:310.40px;font:13.5px/18px 'Liberation Mono', monospace;color:#808080;white-space:pre;letter-spacing:0.900px;">u_x32,0x30,0x33,0x2E,0x30,0x2E,0x3_140006432</div>
<div style="left:645.4px;top:332.90px;font:13.5px/18px 'Liberation Mono', monospace;color:#0000ff;white-space:pre;letter-spacing:0.900px;">u_0x32,0x30,0x33,0x2E,0x30,0x2E,0x_140006430</div>
<div style="left:455.4px;top:400.40px;font:13.5px/18px 'Liberation Mono', monospace;color:#000;white-space:pre;letter-spacing:0.900px;">140006430</div>
<div style="left:545.4px;top:400.40px;font:13.5px/18px 'Liberation Mono', monospace;color:#0000ff;white-space:pre;letter-spacing:0.900px;">30 00 78</div>
<div style="left:682.4px;top:400.40px;font:13.5px/18px 'Liberation Mono', monospace;color:#000080;white-space:pre;letter-spacing:0.900px;">unicode</div>
<div style="left:782px;top:390px;width:275px;height:30px;overflow:hidden">
<div style="left:0.6px;top:10.40px;font:13.5px/18px 'Liberation Mono', monospace;color:#008000;white-space:pre;letter-spacing:0.900px;">u"0x32,0x30,0x33,0x2E,0x30,0x2E,0x30,</div>
</div>
<div style="left:545.4px;top:422.90px;font:13.5px/18px 'Liberation Mono', monospace;color:#0000ff;white-space:pre;letter-spacing:0.900px;">00 33 00</div>
<div style="left:545.4px;top:445.40px;font:13.5px/18px 'Liberation Mono', monospace;color:#0000ff;white-space:pre;letter-spacing:0.900px;">32 00 2c</div>
<div style="left:626px;top:445.40px;font:13.5px/18px 'Liberation Mono', monospace;color:#0000ff;white-space:pre;font-weight:bold;letter-spacing:-3.400px;">...</div>
<div style="left:645.4px;top:490.40px;font:13.5px/18px 'Liberation Mono', monospace;color:#0000ff;white-space:pre;letter-spacing:0.900px;">DAT_1400064e8</div>
<div style="left:455.4px;top:557.90px;font:13.5px/18px 'Liberation Mono', monospace;color:#000;white-space:pre;letter-spacing:0.900px;">1400064e8</div>
<div style="left:545.4px;top:557.90px;font:13.5px/18px 'Liberation Mono', monospace;color:#0000ff;white-space:pre;letter-spacing:0.900px;">20 00</div>
<div style="left:682.4px;top:557.90px;font:13.5px/18px 'Liberation Mono', monospace;color:#000080;white-space:pre;letter-spacing:0.900px;">undefine</div>
<div style="left:782.4px;top:557.90px;font:13.5px/18px 'Liberation Mono', monospace;color:#008000;white-space:pre;letter-spacing:0.900px;">0020h</div>
<div style="left:754px;top:557.90px;font:13.5px/18px 'Liberation Mono', monospace;color:#000080;white-space:pre;font-weight:bold;letter-spacing:-3.400px;">...</div>
<div style="left:645.4px;top:602.90px;font:13.5px/18px 'Liberation Mono', monospace;color:#0000ff;white-space:pre;letter-spacing:0.900px;">DAT_1400064ea</div>
<div style="left:455.4px;top:625.40px;font:13.5px/18px 'Liberation Mono', monospace;color:#000;white-space:pre;letter-spacing:0.900px;">1400064ea</div>
<div style="left:545.4px;top:625.40px;font:13.5px/18px 'Liberation Mono', monospace;color:#0000ff;white-space:pre;letter-spacing:0.900px;">2b 00</div>
<div style="left:682.4px;top:625.40px;font:13.5px/18px 'Liberation Mono', monospace;color:#000080;white-space:pre;letter-spacing:0.900px;">undefine</div>
<div style="left:782.4px;top:625.40px;font:13.5px/18px 'Liberation Mono', monospace;color:#008000;white-space:pre;letter-spacing:0.900px;">002Bh</div>
<div style="left:754px;top:625.40px;font:13.5px/18px 'Liberation Mono', monospace;color:#000080;white-space:pre;font-weight:bold;letter-spacing:-3.400px;">...</div>
<div style="left:455.4px;top:647.90px;font:13.5px/18px 'Liberation Mono', monospace;color:#000;white-space:pre;letter-spacing:0.900px;">1400064ec</div>
<div style="left:545.4px;top:647.90px;font:13.5px/18px 'Liberation Mono', monospace;color:#0000ff;white-space:pre;letter-spacing:0.900px;">20</div>
<div style="left:682.4px;top:647.90px;font:13.5px/18px 'Liberation Mono', monospace;color:#000080;white-space:pre;letter-spacing:0.900px;">??</div>
<div style="left:782.4px;top:647.90px;font:13.5px/18px 'Liberation Mono', monospace;color:#008000;white-space:pre;letter-spacing:0.900px;">20h</div>
<div style="left:1919px;top:29px;width:1px;height:213px;background:#1a1a1a;"></div>
<div style="left:1919px;top:242px;width:1px;height:655px;background:#f8f8f8;"></div>
<div style="left:1106px;top:91px;width:2px;height:599px;background:#ffffff;"></div>
<div style="left:1918px;top:91px;width:1px;height:600px;background:#828282;"></div>
<div style="left:1105px;top:690px;width:814px;height:1px;background:#828282;"></div>
<div style="left:1108px;top:125px;width:20px;height:563px;background:#f0f0f0;"></div>
<div style="left:1128px;top:125px;width:1px;height:563px;background:#808080;"></div>
<div style="left:1129px;top:125px;width:787px;height:542px;background:#ffffff;"></div>
<div style="left:1916px;top:125px;width:1px;height:563px;background:#8a939e;"></div>
<div style="left:1917px;top:125px;width:1px;height:563px;background:#c8c8c8;"></div>
<div style="left:1108px;top:687px;width:809px;height:1px;background:#8a939e;"></div>
<div style="left:1108px;top:93px;width:809px;height:32px;border:1px solid #828282;background:#ffffff;"></div>
<div style="left:1110px;top:96px;width:805px;height:27px;background:linear-gradient(90deg,#ababab 0,#ababab 125px,#f0f0f0 527px);"></div>
<div style="left:1110px;top:123px;width:805px;height:1px;background:#f4f4f4;"></div>
<svg style="left:1113.500px;top:97px" width="21" height="23" viewBox="0 0 21 23"><text x="0" y="16.800" font-family="'Liberation Sans',sans-serif" font-weight="bold" font-size="18" fill="#3a8cff" stroke="#3a8cff" stroke-width="1.800">C</text><text x="12" y="20.500" font-family="'Liberation Serif',serif" font-weight="bold" font-style="italic" font-size="13" fill="#e010d0" stroke="#e010d0" stroke-width="1">f</text></svg>
<div style="left:1137px;top:101.30px;font:13px/17px 'Liberation Sans', sans-serif;color:#000;white-space:pre;letter-spacing:-0.060px;">Decompile: entry -  (OUTPUT.exe)</div>
<svg style="left:1642px;top:98px;" width="21" height="21" viewBox="0 0 21 21"><path d="M3 9C3 4 8 1 13 3l1.500-2.500L17 7l-6.500-.5L12.500 4.500C9 3.500 6 6 6 9z" fill="#28b428" stroke="#0e7a0e" stroke-width=".9"/><path d="M17.500 11c0 5-5 8-10 6l-1.500 2.500L3.500 13l6.500.5-2 2c3.500 1 6.500-1.500 6.500-4.500z" fill="#28b428" stroke="#0e7a0e" stroke-width=".9"/></svg>
<svg style="left:1671px;top:100px;" width="21" height="17" viewBox="0 0 21 17"><rect x="8" y=".5" width="4.500" height="4.500" fill="#9cc0f0" stroke="#5a8ad8" stroke-width=".8"/><path d="M10.300 5v3.500M3 11V8.500h14.500V11M10.300 8.500V11" fill="none" stroke="#a0a0a0" stroke-width="1.200"/><rect x=".5" y="11" width="4.500" height="4.500" fill="#6cc86c" stroke="#2e9a2e" stroke-width=".8"/><rect x="8" y="11" width="4.500" height="4.500" fill="#6cc86c" stroke="#2e9a2e" stroke-width=".8"/><rect x="15.500" y="11" width="4.500" height="4.500" fill="#e85050" stroke="#b02020" stroke-width=".8"/></svg>
<svg style="left:1699px;top:99px" width="22" height="20" viewBox="0 0 22 20"><text x="0" y="16.500" font-family="'Liberation Sans',sans-serif" font-size="19" fill="#3f8cf0" stroke="#3f8cf0" stroke-width=".7" textLength="21" lengthAdjust="spacingAndGlyphs">Ro</text></svg>
<div style="left:1731px;top:97px;width:1px;height:23px;background:#a0a0a0;"></div>
<div style="left:1732px;top:97px;width:1px;height:23px;background:#ffffff;"></div>
<svg style="left:1743px;top:98px;" width="20" height="21" viewBox="0 0 20 21"><path d="M.5 .5h8l3 3v10h-11z" fill="#fbfbfb" stroke="#c6c6c6"/><path d="M8.500 7.500h7l3.500 3.500v9.500h-10.500z" fill="#fdfdfd" stroke="#c6c6c6"/><path d="M15.500 7.500v3.500h3.500" fill="none" stroke="#c6c6c6"/></svg>
<div style="left:1775px;top:97px;width:1px;height:23px;background:#a0a0a0;"></div>
<div style="left:1776px;top:97px;width:1px;height:23px;background:#ffffff;"></div>
<svg style="left:1789px;top:98px;" width="20" height="21" viewBox="0 0 20 21"><rect x=".7" y=".7" width="15" height="19" rx="1" fill="#e4eefc" stroke="#3f7fe0" stroke-width="1.400"/><rect x="2" y="13.500" width="12.500" height="5" fill="#68a8ee"/><path d="M5 14.500L15 3l3 2.500L8 17l-4 1.500z" fill="#f4b040" stroke="#b87818" stroke-width=".9"/><path d="M15 3l1.500-1.500 3 2.500L18 5.500z" fill="#f0a0a8" stroke="#b87818" stroke-width=".7"/><path d="M4 18.500l1-4 3 2.500z" fill="#f8e0b0" stroke="#8a5a10" stroke-width=".6"/></svg>
<div style="left:1818px;top:97px;width:1px;height:23px;background:#a0a0a0;"></div>
<div style="left:1819px;top:97px;width:1px;height:23px;background:#ffffff;"></div>
<svg style="left:1831px;top:98px;" width="20" height="21" viewBox="0 0 20 21"><rect x="6" y=".5" width="8" height="5" rx="1" fill="#4a4a4a" stroke="#222"/><rect x="7.500" y="1.500" width="5" height="2" fill="#d8d8d8"/><rect x=".7" y="4.700" width="18.600" height="12.600" rx="1.500" fill="#3c3c3c" stroke="#161616" stroke-width="1.200"/><circle cx="10" cy="12" r="4.800" fill="#222" stroke="#6a6a6a"/><circle cx="10" cy="12" r="2.300" fill="#0a0a0a"/><circle cx="11" cy="10.800" r="1" fill="#e8e8e8"/><rect x="5" y="17.500" width="10" height="2" fill="#555"/></svg>
<div style="left:1856px;top:97px;width:1px;height:23px;background:#a0a0a0;"></div>
<svg style="left:1866px;top:105px;" width="12" height="7" viewBox="0 0 12 7"><path d="M0 0h12l-6 7z" fill="#000"/></svg>
<svg style="left:1893px;top:101px;" width="14" height="14" viewBox="0 0 14 14"><path d="M1.500 1.500l11 11M12.500 1.500l-11 11" stroke="#000" stroke-width="3" stroke-linecap="butt"/></svg>
<div style="left:1129px;top:667px;width:787px;height:20px;background:#f0f0f0;"></div>
<svg style="left:1134px;top:671px;" width="12" height="12" viewBox="-6 -6 12 12"><path d="M2.500 -4L-1.500 0 2.500 4" fill="none" stroke="#606060" stroke-width="1.700"/></svg>
<svg style="left:1899px;top:671px;" width="12" height="12" viewBox="-6 -6 12 12"><path d="M-2.500 -4L1.500 0 -2.500 4" fill="none" stroke="#606060" stroke-width="1.700"/></svg>
<div style="left:1151px;top:667px;width:668px;height:20px;background:#cdcdcd;"></div>
<div style="left:1108px;top:129.00px;width:18.500px;text-align:right;font:13.500px/18px 'Liberation Sans',sans-serif;color:#000">1</div>
<div style="left:1108px;top:151.50px;width:18.500px;text-align:right;font:13.500px/18px 'Liberation Sans',sans-serif;color:#000">2</div>
<div style="left:1108px;top:174.00px;width:18.500px;text-align:right;font:13.500px/18px 'Liberation Sans',sans-serif;color:#000">3</div>
<div style="left:1108px;top:196.50px;width:18.500px;text-align:right;font:13.500px/18px 'Liberation Sans',sans-serif;color:#000">4</div>
<div style="left:1108px;top:219.00px;width:18.500px;text-align:right;font:13.500px/18px 'Liberation Sans',sans-serif;color:#000">5</div>
<div style="left:1108px;top:241.50px;width:18.500px;text-align:right;font:13.500px/18px 'Liberation Sans',sans-serif;color:#000">6</div>
<div style="left:1108px;top:264.00px;width:18.500px;text-align:right;font:13.500px/18px 'Liberation Sans',sans-serif;color:#000">7</div>
<div style="left:1108px;top:286.50px;width:18.500px;text-align:right;font:13.500px/18px 'Liberation Sans',sans-serif;color:#000">8</div>
<div style="left:1108px;top:309.00px;width:18.500px;text-align:right;font:13.500px/18px 'Liberation Sans',sans-serif;color:#000">9</div>
<div style="left:1130px;top:148px;width:36px;height:23px;background:#ffff80;"></div>
<div style="left:1130px;top:148px;width:2px;height:23px;background:#f8a8b8;"></div>
<div style="left:1131.4px;top:152.90px;font:13.5px/18px 'Liberation Mono', monospace;color:#0000ff;white-space:pre;letter-spacing:0.900px;">void</div>
<div style="left:1167.4px;top:152.90px;font:13.5px/18px 'Liberation Mono', monospace;color:#000;white-space:pre;letter-spacing:0.900px;"> </div>
<div style="left:1176.4px;top:152.90px;font:13.5px/18px 'Liberation Mono', monospace;color:#0000ff;white-space:pre;letter-spacing:0.900px;">entry</div>
<div style="left:1221.4px;top:152.90px;font:13.5px/18px 'Liberation Mono', monospace;color:#000;white-space:pre;letter-spacing:0.900px;">(</div>
<div style="left:1230.4px;top:152.90px;font:13.5px/18px 'Liberation Mono', monospace;color:#0000ff;white-space:pre;letter-spacing:0.900px;">void</div>
<div style="left:1266.4px;top:152.90px;font:13.5px/18px 'Liberation Mono', monospace;color:#000;white-space:pre;letter-spacing:0.900px;">)</div>
<div style="left:1131.4px;top:197.90px;font:13.5px/18px 'Liberation Mono', monospace;color:#000;white-space:pre;letter-spacing:0.900px;">{</div>
<div style="left:1131.4px;top:220.40px;font:13.5px/18px 'Liberation Mono', monospace;color:#000;white-space:pre;letter-spacing:0.900px;">  </div>
<div style="left:1149.4px;top:220.40px;font:13.5px/18px 'Liberation Mono', monospace;color:#0000ff;white-space:pre;letter-spacing:0.900px;">FUN_140004a58</div>
<div style="left:1266.4px;top:220.40px;font:13.5px/18px 'Liberation Mono', monospace;color:#000;white-space:pre;letter-spacing:0.900px;">();</div>
<div style="left:1131.4px;top:242.90px;font:13.5px/18px 'Liberation Mono', monospace;color:#000;white-space:pre;letter-spacing:0.900px;">  </div>
<div style="left:1149.4px;top:242.90px;font:13.5px/18px 'Liberation Mono', monospace;color:#0000ff;white-space:pre;letter-spacing:0.900px;">FUN_1400042e4</div>
<div style="left:1266.4px;top:242.90px;font:13.5px/18px 'Liberation Mono', monospace;color:#000;white-space:pre;letter-spacing:0.900px;">();</div>
<div style="left:1131.4px;top:265.40px;font:13.5px/18px 'Liberation Mono', monospace;color:#000;white-space:pre;letter-spacing:0.900px;">  </div>
<div style="left:1149.4px;top:265.40px;font:13.5px/18px 'Liberation Mono', monospace;color:#0000ff;white-space:pre;letter-spacing:0.900px;">return</div>
<div style="left:1203.4px;top:265.40px;font:13.5px/18px 'Liberation Mono', monospace;color:#000;white-space:pre;letter-spacing:0.900px;">;</div>
<div style="left:1131.4px;top:287.90px;font:13.5px/18px 'Liberation Mono', monospace;color:#000;white-space:pre;letter-spacing:0.900px;">}</div>
<svg style="left:1224px;top:426px;" width="22" height="28" viewBox="0 0 22 28"><path d="M7.400 16.300V4.200c0-2.500 3.500-2.500 3.500 0V8.200c.6-1 2.200-.9 2.500.3.700-1 2.600-.8 3.200.5.800-.9 3-.5 3 1.500v7.500c0 4.500-3.500 7.500-7.200 7.500-3 0-5-2-6.500-4.300L2.700 17.500c-1.600-1.800.3-4 2.200-2.800z" fill="#fff" stroke="#14142a" stroke-width="1.150" stroke-linejoin="round"/><path d="M10.900 8v4.500M13.400 8.800v3.700M16.600 9.300v3.200" stroke="#14142a" stroke-width="1.150" stroke-linecap="round"/></svg>
<div style="left:278px;top:696px;width:1641px;height:2px;background:#ffffff;"></div>
<div style="left:278px;top:696px;width:3px;height:163px;background:#ffffff;"></div>
<div style="left:1918px;top:696px;width:1px;height:164px;background:#828282;"></div>
<div style="left:0px;top:860px;width:1918px;height:1px;background:#767676;"></div>
<div style="left:0px;top:861px;width:1919px;height:1px;background:#ffffff;"></div>
<div style="left:281px;top:730px;width:1635px;height:127px;background:#ffffff;"></div>
<div style="left:1916px;top:730px;width:1px;height:128px;background:#8a939e;"></div>
<div style="left:281px;top:857px;width:1636px;height:1px;background:#8a939e;"></div>
<div style="left:281px;top:858px;width:1637px;height:1px;background:#b4b4b4;"></div>
<div style="left:1917px;top:698px;width:1px;height:161px;background:#c8c8c8;"></div>
<div style="left:281px;top:730px;width:1px;height:128px;background:#8a939e;"></div>
<div style="left:281px;top:698px;width:1636px;height:32px;border:1px solid #828282;background:#ffffff;"></div>
<div style="left:283px;top:701px;width:1632px;height:27px;background:linear-gradient(90deg,#ababab 0,#ababab 277px,#f0f0f0 1543px);"></div>
<div style="left:283px;top:728px;width:1632px;height:1px;background:#f4f4f4;"></div>
<svg style="left:287px;top:704px;" width="16" height="19" viewBox="0 0 16 19"><rect x=".6" y=".6" width="14.800" height="11.800" rx="1" fill="#f0f0f0" stroke="#b8b8b8" stroke-width="1.200"/><rect x="2" y="2" width="12" height="9" fill="#5a8ede"/><path d="M2 2h12L2 9z" fill="#7aa8ea"/><rect x="6.500" y="13" width="3" height="3" fill="#c8c8c8"/><rect x="3.500" y="16" width="9" height="2" rx="1" fill="#d8d8d8" stroke="#b0b0b0" stroke-width=".5"/></svg>
<div style="left:310.5px;top:706.30px;font:13px/17px 'Liberation Sans', sans-serif;color:#000;white-space:pre;letter-spacing:-0.149px;">Console - Scripting</div>
<svg style="left:1831px;top:702px;" width="20" height="22" viewBox="0 0 20 22"><path d="M4.500 9V6.500C4.500 2 15.500 2 15.500 6.500V9" fill="none" stroke="#b4b4b4" stroke-width="2.600"/><rect x="1" y="8.500" width="18" height="12.500" rx="1" fill="#f2a830" stroke="#c8780c" stroke-width="1.200"/><rect x="3" y="10.500" width="14" height="8.500" fill="#fad070"/><path d="M5 13h4M5 16h4M11 13h4M11 16h4" stroke="#e8982a" stroke-width="1.800"/></svg>
<svg style="left:1861px;top:702px;" width="20" height="22" viewBox="0 0 20 22"><path d="M7 1h11l-5 12H3z" fill="#f4c020" stroke="#000" stroke-width="1.200"/><path d="M10.500 1L6.500 13M14 1L10 13" stroke="#fff4a0" stroke-width="1.400"/><path d="M3.500 11.500L12.500 12.500 10 18.500c-2 2-8 1.500-9-1-1-2 .5-5 2.500-6z" fill="#f6b8c4" stroke="#c07888" stroke-width="1"/><path d="M4 21h14" stroke="#d8a0b0" stroke-width="1.400" stroke-dasharray="3 1"/></svg>
<div style="left:1885px;top:702px;width:1px;height:23px;background:#a0a0a0;"></div>
<div style="left:1886px;top:702px;width:1px;height:23px;background:#ffffff;"></div>
<svg style="left:1893px;top:706px;" width="14" height="14" viewBox="0 0 14 14"><path d="M1.500 1.500l11 11M12.500 1.500l-11 11" stroke="#000" stroke-width="3" stroke-linecap="butt"/></svg>
<div style="left:0px;top:862px;width:1919px;height:35px;background:#f0f0f0;"></div>
<svg style="left:3px;top:870px;" width="22" height="22" viewBox="0 0 30 30"><circle cx="15" cy="15" r="14.400" fill="#fff" stroke="#2c2c2c" stroke-width="1.200"/><path d="M4.500 23.500C8 28 14 30 19 28.500c3-1 5.500-3 7-5.500-3 3-8 4.500-12 4-4-.5-7-2-9.500-3.500z" fill="#f28a18"/><path d="M2 14L4 12.500 9.500 7.500 15 4.500 19.500 3c3.500 0 6.500 2 8 6 2 5 1.500 11-2 15-3.500 3.500-8.500 5-12.500 4.500 4-1 8-3 10-6.500 2-3.500 1.500-7.500-1-9.500-1.500-1-3-1-4.500 0L14.500 18 12.500 22.500 8.500 21.500 10.500 20 12 16 10 14.500 8.500 16.500 7.300 15.200 6 17 5 15.800 3.500 18z" fill="#e8281c"/><path d="M19.500 3.500c3 1 5 3 6 6" fill="none" stroke="#f2701c" stroke-width="1"/></svg>
<div style="left:28px;top:864px;width:1px;height:32px;background:#a0a0a0;"></div>
<div style="left:29px;top:864px;width:1px;height:32px;background:#ffffff;"></div>
<div style="left:30px;top:865px;width:1285px;height:31px;border-top:1px solid #a0a0a0;border-left:1px solid #a0a0a0;border-right:1px solid #ffffff;border-bottom:1px solid #ffffff;"></div>
<div style="left:31px;top:866px;width:1283px;height:29px;border-top:1px solid #d4d4d4;border-left:1px solid #d4d4d4;"></div>
<div style="left:1318px;top:865px;width:129px;height:31px;border-top:1px solid #a0a0a0;border-left:1px solid #a0a0a0;border-right:1px solid #ffffff;border-bottom:1px solid #ffffff;"></div>
<div style="left:1319px;top:866px;width:127px;height:29px;border-top:1px solid #d4d4d4;border-left:1px solid #d4d4d4;"></div>
<div style="left:1450px;top:865px;width:173px;height:31px;border-top:1px solid #a0a0a0;border-left:1px solid #a0a0a0;border-right:1px solid #ffffff;border-bottom:1px solid #ffffff;"></div>
<div style="left:1451px;top:866px;width:171px;height:29px;border-top:1px solid #d4d4d4;border-left:1px solid #d4d4d4;"></div>
<div style="left:1626px;top:865px;width:262px;height:31px;border-top:1px solid #a0a0a0;border-left:1px solid #a0a0a0;border-right:1px solid #ffffff;border-bottom:1px solid #ffffff;"></div>
<div style="left:1627px;top:866px;width:260px;height:29px;border-top:1px solid #d4d4d4;border-left:1px solid #d4d4d4;"></div>
<div style="left:1891px;top:865px;width:28px;height:31px;border-top:1px solid #a0a0a0;border-left:1px solid #a0a0a0;border-right:1px solid #ffffff;border-bottom:1px solid #ffffff;"></div>
<div style="left:1892px;top:866px;width:26px;height:29px;border-top:1px solid #d4d4d4;border-left:1px solid #d4d4d4;"></div>
<div style="left:1322.6px;top:873.00px;font:13px/17px 'Liberation Sans', sans-serif;color:#000;white-space:pre;letter-spacing:-0.507px;">140006430</div>
<div style="left:1631px;top:873.00px;font:13px/17px 'Liberation Sans', sans-serif;color:#000;white-space:pre;letter-spacing:0.136px;">unicode  (184)</div>
<div style="left:0px;top:897px;width:1920px;height:50px;background:#1b1b1b;"></div>
<svg style="left:20px;top:911px;" width="21" height="21" viewBox="0 0 21 21.400"><path d="M0 3l8.500-1.200v8.400H0zM9.500 1.600L21 0v10.200H9.500zM0 11.200h8.500v8.400L0 18.400zM9.500 11.200H21V21.400L9.500 19.800z" fill="#fff"/></svg>
<svg style="left:80px;top:910px;" width="28" height="23" viewBox="0 0 28 23"><path d="M0 2.500C0 1.500.8 1 1.500 1H9l2.500 2.500H26.500c.8 0 1.500.5 1.500 1.500V21c0 1-.7 1.500-1.500 1.500H1.500C.7 22.500 0 22 0 21z" fill="#f4b400"/><path d="M0 5.500h28V21c0 1-.7 1.500-1.500 1.500H1.500C.7 22.500 0 22 0 21z" fill="#ffd257"/><path d="M5.500 23V14.500c0-1 .7-1.500 1.500-1.500h14c.8 0 1.500.5 1.500 1.500V23h-4.500v-6h-8v6z" fill="#2f8fe0"/></svg>
<div style="left:69px;top:944px;width:51px;height:3px;background:#76b9ed;"></div>
<svg style="left:141px;top:911px;" width="30" height="22" viewBox="0 0 30 22"><rect x="0" y="0" width="30" height="22" rx="1.500" fill="#3b3b3b"/><rect x="0" y="0" width="30" height="3.500" rx="1" fill="#9a9a9a"/><rect x="10" y="0" width="10" height="3.500" fill="#b8b8b8"/><path d="M4.500 8l6 4.500-6 4.500" fill="none" stroke="#d0d0d0" stroke-width="2.400"/><rect x="14" y="16.500" width="10" height="2.400" fill="#e0e0e0"/></svg>
<svg style="left:203px;top:907px;" width="30" height="30" viewBox="0 0 30 30"><circle cx="15" cy="15" r="15" fill="#fff"/><path d="M15 15L2 7.500A15 15 0 0 1 28 7.500z" fill="#ea4335"/><path d="M15 15L28 7.500A15 15 0 0 1 15 30z" fill="#fbbc05"/><path d="M15 15L15 30A15 15 0 0 1 2 7.500z" fill="#34a853"/><path d="M15 8h13a15 15 0 0 0-26 -.5l6.500 11z" fill="#ea4335"/><path d="M21.100 18.500L14.600 30A15 15 0 0 0 28 7.500H15z" fill="#fbbc05"/><path d="M8.900 18.500L2 7.500a15 15 0 0 0 12.600 22.500l6.500-11.500z" fill="#34a853"/><circle cx="15" cy="15" r="7" fill="#fff"/><circle cx="15" cy="15" r="5.600" fill="#4285f4"/></svg>
<svg style="left:264px;top:906px;" width="32" height="32" viewBox="0 0 32 32"><path d="M3 8C4 2 12 0 18 2c7 1 12 7 10 14-1 5-4 9-8 12l-9-2C6 22 2 14 3 8z" fill="#1c1511"/><path d="M4.500 9c1-3.500 5-5.500 8-4.500 3 1 3.500 5 3 9-.5 4-1.500 8-4 10.500-2.500 1-5 0-5.500-3C5.500 19 3.500 13 4.500 9z" fill="#e6c9a6"/><path d="M5.500 15c1 .5 2 .5 3 0M5 11.500h2.500M10 11.500h3" stroke="#7a5a44" stroke-width=".9" fill="none"/><path d="M7 20.500c1 .8 2.500.8 3.500 0" stroke="#c05848" stroke-width="1.100" fill="none"/><path d="M9 25c3-1 8-1.500 11-2 3 2 5 5 5 9H8.500c-1-2-1-5 .5-7z" fill="#dcb892"/><path d="M10 27.500c3 1.500 8 1 11-1.500" stroke="#fbf3e4" stroke-width="1.300" stroke-dasharray="1.300 .7" fill="none"/><path d="M12 5c3-1 7 0 9 4 1 4 0 9-3 13l-3 1c1.500-4 2-9 1-13-.5-2.500-2-4-4-5z" fill="#2a1d16"/><circle cx="24" cy="7.500" r="4.200" fill="#e6a514"/><circle cx="22.800" cy="6.300" r="1.500" fill="#f7cc3a"/><path d="M22 9.500c1.500 1 3 1 4.500-.5" stroke="#8a5a08" stroke-width=".9" fill="none"/></svg>
<svg style="left:327px;top:906px" width="31" height="31" viewBox="0 0 31 31"><defs><linearGradient id="fng" x1="0" y1="0" x2="0" y2="1"><stop offset="0" stop-color="#f2f2f4"/><stop offset="1" stop-color="#d6d8e0"/></linearGradient></defs><rect x="0" y="0" width="31" height="31" rx="6.500" fill="url(#fng)"/><path d="M5 6h.01M9 3.500h.01M16 4h.01M24 6h.01M27 12h.01M3.500 14h.01M4 22h.01M8 26h.01M14 27.500h.01M21 25h.01M27 21h.01M25 27h.01M20 8h.01M11 8.500h.01M22 20h.01" stroke="#9a9aa4" stroke-width="1.400" stroke-linecap="round"/><text x="15.500" y="20.700" text-anchor="middle" font-family="'Liberation Sans',sans-serif" font-weight="bold" font-size="14" fill="#d01030" stroke="#d01030" stroke-width=".5" textLength="20.500" lengthAdjust="spacingAndGlyphs">FN</text></svg>
<svg style="left:389px;top:910px;" width="31" height="23" viewBox="0 0 31 23"><defs><linearGradient id="ppg" x1="0" y1="0" x2="0" y2="1"><stop offset="0" stop-color="#f04038"/><stop offset="1" stop-color="#c81414"/></linearGradient></defs><path d="M1 11.500c2-3.500 7-2.500 11.500-1.500 3.500.8 6-2.500 9.500-1.500 4 1 4.500 5 3.500 8 .8 2 0 4.500-2 4.500-1.500 0-2-1-3-.8-1 1.500-3.500 1.500-5 .5C11 21.500 3 19 1 11.500z" fill="url(#ppg)"/><path d="M4 12c3-1.500 7-.5 10 .5M20 10.500c1.500 0 2.500 1 3 2.500" fill="none" stroke="#ff8a80" stroke-width="1.200" stroke-linecap="round"/><path d="M21 9.500c1 3 .5 6-.5 10" fill="none" stroke="#a80c0c" stroke-width=".9"/><path d="M22.500 15c3-2 5.500-6 4-12.500" fill="none" stroke="#8a9a20" stroke-width="2.200" stroke-linecap="round"/></svg>
<svg style="left:452px;top:908px;" width="27" height="26" viewBox="0 0 27 26"><rect x="0" y="0" width="25" height="25" fill="#1584e6"/><rect x="0" y="11.500" width="25" height="13.500" fill="#27a4f0"/><circle cx="12.500" cy="10.500" r="7.500" fill="#8edcfc" stroke="#4cc0f8" stroke-width="2"/><path d="M18.500 16.500L25.500 24" stroke="#1a7ae0" stroke-width="3.500" stroke-linecap="round"/></svg>
<svg style="left:513px;top:910px;" width="31" height="23" viewBox="0 0 31 23"><path d="M4 1h27l-2.500 21H0z" fill="#1f7ad8"/><path d="M6.500 4.500h21l-1.800 14.500H4.500z" fill="#155fb4"/><path d="M5 15.500h6l2-3 2 2.500 2.500-6 2.500 6.500 2-2.500h5" fill="none" stroke="#8ad0ff" stroke-width="1.200"/></svg>
<svg style="left:575px;top:907px;" width="30" height="29" viewBox="0 0 30 29"><defs><linearGradient id="npg" x1="0" y1="0" x2="0" y2="1"><stop offset="0" stop-color="#f6f6f6"/><stop offset=".42" stop-color="#eef6d8"/><stop offset=".6" stop-color="#a6d83c"/><stop offset="1" stop-color="#2e9a1e"/></linearGradient></defs><path d="M1 2h15l6.500 6v19.500H1z" fill="url(#npg)" stroke="#8a8a8a" stroke-width="1.100"/><path d="M2.500 2.800h12" stroke="#555" stroke-width="1.600" stroke-dasharray="1 1"/><path d="M16 2v6h6.500" fill="#e0e0e0" stroke="#8a8a8a" stroke-width=".9"/><path d="M5 13c2-3 6-3.500 9-2 2.500-1.500 5 0 4.500 2.500 1.500 2 .5 5-2 6-1 2-4 2.500-6 1-3 .5-6-1.500-6-4.500 0-1 .2-2 .5-3z" fill="#7acc2a" stroke="#2a6a14" stroke-width="1"/><circle cx="14" cy="9.500" r="2.300" fill="#f4f4f4" stroke="#444" stroke-width=".8"/><path d="M6 15h9M7 18h6" stroke="#1e5a10" stroke-width="1"/><path d="M27.500 1l2 1.500-9 20.500-3 2.500.5-4z" fill="#f0b820" stroke="#9a6a10" stroke-width=".8"/><path d="M27.500 1l2 1.500-.8 1.800-2-1.500z" fill="#d83a30"/></svg>
<div style="left:622px;top:897px;width:61px;height:50px;background:#3b3b3b;"></div>
<div style="left:678px;top:897px;width:5px;height:50px;background:#4c4c4c;"></div>
<div style="left:622px;top:944px;width:61px;height:3px;background:#76b9ed;"></div>
<svg style="left:637px;top:906.5px;" width="30" height="30" viewBox="0 0 30 30"><circle cx="15" cy="15" r="14.400" fill="#fff" stroke="#1c1c1c" stroke-width=".9"/><path d="M4.500 23.500C8 28 14 30 19 28.500c3-1 5.500-3 7-5.500-3 3-8 4.500-12 4-4-.5-7-2-9.500-3.500z" fill="#f28a18"/><path d="M2 14L4 12.500 9.500 7.500 15 4.500 19.500 3c3.500 0 6.500 2 8 6 2 5 1.500 11-2 15-3.500 3.500-8.500 5-12.500 4.500 4-1 8-3 10-6.500 2-3.500 1.500-7.500-1-9.500-1.500-1-3-1-4.500 0L14.500 18 12.500 22.500 8.500 21.500 10.500 20 12 16 10 14.500 8.500 16.500 7.300 15.200 6 17 5 15.800 3.500 18z" fill="#e8281c"/><path d="M19.500 3.500c3 1 5 3 6 6" fill="none" stroke="#f2701c" stroke-width="1"/></svg>
<svg style="left:1522px;top:913px;" width="31" height="22" viewBox="0 0 31 22"><rect x="1" y="1" width="25" height="20" rx="2.500" fill="none" stroke="#fff" stroke-width="1.800"/><path d="M26 5h2.500c1 0 1.500.8 1.500 1.500V18c0 2-1.500 3-3 3" fill="none" stroke="#fff" stroke-width="1.800"/><rect x="5" y="8.500" width="8" height="8" fill="none" stroke="#fff" stroke-width="1.800"/><path d="M5 5h17M16 9.500h6M16 13h6M16 16.500h6" stroke="#fff" stroke-width="1.800"/></svg>
<div style="left:1562px;top:911.76px;font:18px/23px 'Liberation Sans', sans-serif;color:#fff;white-space:pre;letter-spacing:-0.568px;">80°F  Sunny</div>
<svg style="left:1687px;top:916px;" width="17" height="10" viewBox="0 0 17 10"><path d="M1 9.500L8.500 1.500 16 9.500" fill="none" stroke="#fff" stroke-width="1.500"/></svg>
<svg style="left:1715px;top:912px;" width="22" height="20" viewBox="0 0 22 20"><path d="M1 7h3.500L9 2.500v15L4.500 13H1z" fill="none" stroke="#fff" stroke-width="1.300" stroke-linejoin="round"/><path d="M12 7c1.300 1.500 1.300 4.500 0 6M15 4.500c2.500 3 2.500 8 0 11M18 2c3.700 4.500 3.700 11.500 0 16" fill="none" stroke="#fff" stroke-width="1.300"/></svg>
<svg style="left:1745px;top:912px;" width="22" height="22" viewBox="0 0 22 22"><circle cx="10.500" cy="10.500" r="9.500" fill="none" stroke="#fff" stroke-width="1.300"/><ellipse cx="10.500" cy="10.500" rx="4.500" ry="9.500" fill="none" stroke="#fff" stroke-width="1.300"/><path d="M1 10.500h19M2.500 5.500h16M2.500 15.500h10" stroke="#fff" stroke-width="1.300"/><circle cx="17" cy="17" r="4.500" fill="#1b1b1b" stroke="#fff" stroke-width="1.300"/><path d="M14 20l6-6" stroke="#fff" stroke-width="1.300"/></svg>
<div style="left:1781px;top:900.80px;font:15px/20px 'Liberation Sans', sans-serif;color:#fff;white-space:pre;letter-spacing:-0.234px;">10:44 AM</div>
<div style="left:1774.6px;top:923.30px;font:15px/20px 'Liberation Sans', sans-serif;color:#fff;white-space:pre;letter-spacing:0.055px;">11/25/2025</div>
<svg style="left:1869px;top:911px;" width="22" height="20" viewBox="0 0 22 20"><path d="M1 1h20v15H8l-4 3.500V16H1z" fill="#fff"/><path d="M5 5.500h12M5 8.500h12M5 11.500h12" stroke="#1b1b1b" stroke-width="1.200"/></svg>
<svg style="left:1879px;top:921px" width="20" height="20" viewBox="0 0 20 20"><circle cx="10" cy="10" r="9" fill="#2a2a2a" stroke="#8a8a8a" stroke-width="1.200"/><text x="10" y="15" text-anchor="middle" font-family="'Liberation Sans',sans-serif" font-weight="bold" font-size="13" fill="#fff">1</text></svg>
<div style="left:1915px;top:897px;width:1px;height:50px;background:#5a5a5a;"></div></body></html>
